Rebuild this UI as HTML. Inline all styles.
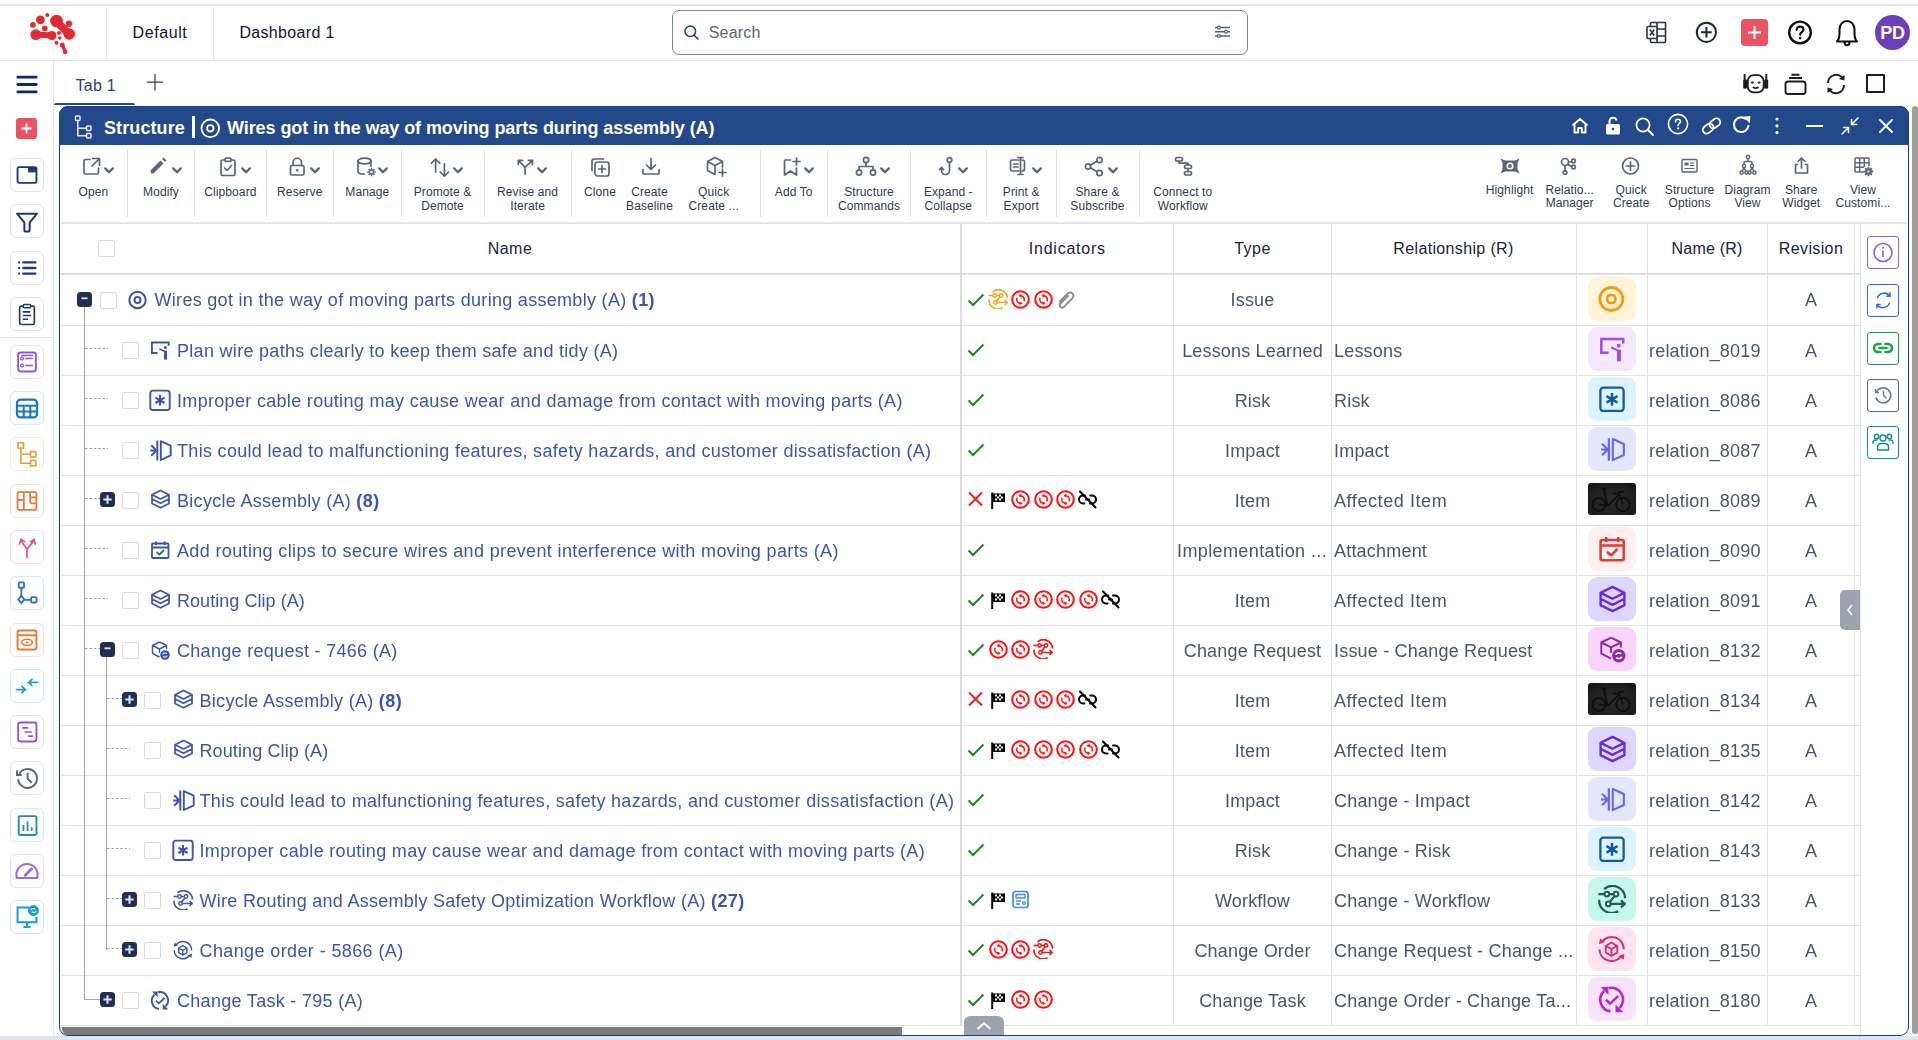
<!DOCTYPE html>
<html><head><meta charset="utf-8"><style>
html,body{margin:0;padding:0;width:1918px;height:1040px;overflow:hidden;background:#fff;position:relative}
body{font-family:"Liberation Sans", sans-serif}
.a{position:absolute;display:block}
.t{position:absolute;white-space:nowrap;line-height:1}
</style></head><body>
<div class="a" style="left:0px;top:4px;width:1918px;height:2px;background:#e4e6e6"></div><div class="a" style="left:0px;top:60px;width:1918px;height:1px;background:#e0e2e6"></div><svg class="a" style="left:0px;top:0px;" width="100" height="60" viewBox="0 0 100 60" fill="none"><g fill="#e02b35">
<circle cx="47.3" cy="15" r="2"/>
<circle cx="40.4" cy="19.8" r="4.4"/>
<circle cx="32.9" cy="24.8" r="2.9"/>
<circle cx="44.8" cy="28.3" r="2.9"/>
<circle cx="56.5" cy="21" r="6.3"/>
<circle cx="69.2" cy="34" r="5.8"/>
<path d="M56 21 L69 34" stroke="#e02b35" stroke-width="8" stroke-linecap="round"/>
<circle cx="68.9" cy="23.7" r="3.2"/>
<circle cx="35.8" cy="34.6" r="5.4"/>
<circle cx="51.9" cy="35.6" r="4.6"/>
<path d="M36 34.6 L52 35.6" stroke="#e02b35" stroke-width="6" stroke-linecap="round"/>
<circle cx="59" cy="32.9" r="2"/>
<circle cx="59.8" cy="38" r="1.7"/>
<circle cx="56.5" cy="42.7" r="2"/>
<circle cx="62.3" cy="45" r="2.5"/>
<circle cx="65.2" cy="51.9" r="2.3"/>
<path d="M62.3 45 L65.2 51.9" stroke="#e02b35" stroke-width="3.2" stroke-linecap="round"/>
</g></svg><div class="a" style="left:106px;top:8px;width:1px;height:50px;background:#e3e5e8"></div><div class="a" style="left:213px;top:8px;width:1px;height:52px;background:#e3e5e8"></div><div class="t" style="left:132.50px;top:24.85px;font-size:16px;font-weight:400;color:#0e1630;letter-spacing:0.6px;">Default</div><div class="t" style="left:239.40px;top:24.85px;font-size:16px;font-weight:400;color:#0e1630;letter-spacing:0.33px;">Dashboard 1</div><div class="a" style="left:672px;top:10px;width:574px;height:43px;border:1.3px solid #7d889e;border-radius:7px;box-sizing:content-box"></div><svg class="a" style="left:682px;top:23px;" width="20" height="20" viewBox="0 0 20 20" fill="none"><circle cx="8.3" cy="8.3" r="5.3" stroke="#1f3b7a" stroke-width="1.5"/><path d="M12.2 12.2 L16 16" stroke="#1f3b7a" stroke-width="1.6" stroke-linecap="round"/></svg><div class="t" style="left:708.70px;top:24.85px;font-size:16px;font-weight:400;color:#5d6573;letter-spacing:0.2px;">Search</div><svg class="a" style="left:1213px;top:24px;" width="20" height="16" viewBox="0 0 20 16" fill="none"><g stroke="#4a62a0" stroke-width="1.5"><path d="M2 3.5H17M2 7.8H17M2 12.1H17"/></g><g fill="#4a62a0"><circle cx="5.8" cy="3.5" r="2"/><circle cx="13" cy="7.8" r="2"/><circle cx="5.8" cy="12.1" r="2"/></g><g fill="#fff"><circle cx="5.8" cy="3.5" r="0.8"/><circle cx="13" cy="7.8" r="0.8"/><circle cx="5.8" cy="12.1" r="0.8"/></g></svg><svg class="a" style="left:1644px;top:20px;" width="26" height="26" viewBox="0 0 26 26" fill="none"><g stroke="#2b3445" stroke-width="1.6" stroke-linejoin="round"><rect x="6.5" y="2.5" width="15" height="20" rx="1"/><path d="M6.5 9H21.5M6.5 16H21.5M13 2.5V22.5"/><rect x="3" y="6.5" width="10" height="12" rx="1" fill="#fff"/><path d="M5.8 9.5L10.2 15.5M10.2 9.5L5.8 15.5"/></g></svg><svg class="a" style="left:1694px;top:20px;" width="25" height="25" viewBox="0 0 25 25" fill="none"><circle cx="12.4" cy="12.3" r="9.6" stroke="#1e2533" stroke-width="2"/><path d="M12.4 7V17.6M7.1 12.3H17.7" stroke="#1e2533" stroke-width="2"/></svg><div class="a" style="left:1741px;top:19px;width:27px;height:27px;background:#ea5360;border-radius:4px"></div><svg class="a" style="left:1741px;top:19px;" width="27" height="27" viewBox="0 0 27 27" fill="none"><path d="M13.5 7V20M7 13.5H20" stroke="#fff" stroke-width="2"/></svg><svg class="a" style="left:1786px;top:19px;" width="28" height="28" viewBox="0 0 28 28" fill="none"><circle cx="14" cy="13.5" r="10.8" stroke="#0b0d12" stroke-width="2.3"/><path d="M10.6 10.8C10.6 8.8 12.1 7.6 14 7.6C15.9 7.6 17.4 8.8 17.4 10.6C17.4 12.9 14.1 13.2 14.1 15.6" stroke="#0b0d12" stroke-width="2.2" fill="none" stroke-linecap="round"/><circle cx="14.1" cy="19.1" r="1.4" fill="#0b0d12"/></svg><svg class="a" style="left:1833px;top:17px;" width="28" height="31" viewBox="0 0 28 31" fill="none"><path d="M4 24.5H24C22 22.5 21.5 20 21.5 16V12.5C21.5 7.5 18.3 4 14 4C9.7 4 6.5 7.5 6.5 12.5V16C6.5 20 6 22.5 4 24.5Z" stroke="#0b0d12" stroke-width="2" stroke-linejoin="round"/><path d="M11.5 25C11.5 27.2 12.6 28.2 14 28.2C15.4 28.2 16.5 27.2 16.5 25" stroke="#0b0d12" stroke-width="2"/></svg><div class="a" style="left:1875px;top:15px;width:35px;height:35px;background:#6b3fb9;border-radius:50%"></div><div class="t" style="left:1872.50px;width:40px;text-align:center;top:24.16px;font-size:18px;font-weight:600;color:#fff;letter-spacing:-0.3px;">PD</div><div class="a" style="left:53px;top:61px;width:1px;height:979px;background:#e3e5e8"></div><svg class="a" style="left:14px;top:74px;" width="26" height="20" viewBox="0 0 26 20" fill="none"><g stroke="#0c2a6b" stroke-width="2.8" stroke-linecap="round"><path d="M3.8 3.2H22.2M3.8 10.5H22.2M3.8 17.8H22.2"/></g></svg><div class="a" style="left:16px;top:118px;width:21px;height:21px;background:#ea5360;border-radius:3px"></div><svg class="a" style="left:16px;top:118px;" width="21" height="21" viewBox="0 0 21 21" fill="none"><path d="M10.5 5.5V15.5M5.5 10.5H15.5" stroke="#fff" stroke-width="1.8"/></svg><div class="a" style="left:10px;top:158.0px;width:32px;height:32px;border:1px solid #dfe4ee;border-radius:6px;background:#fff;box-sizing:content-box"></div><svg class="a" style="left:10px;top:158.0px;transform:scale(1.05);transform-origin:17px 17px" width="34" height="34" viewBox="0 0 34 34" fill="none"><rect x="8" y="9.5" width="18" height="15" rx="1.5" stroke="#1b3a78" stroke-width="1.8"/><rect x="18" y="9.5" width="8" height="5" fill="#1b3a78"/></svg><div class="a" style="left:10px;top:204.2px;width:32px;height:32px;border:1px solid #dfe4ee;border-radius:6px;background:#fff;box-sizing:content-box"></div><svg class="a" style="left:10px;top:204.2px;transform:scale(1.05);transform-origin:17px 17px" width="34" height="34" viewBox="0 0 34 34" fill="none"><path d="M7.5 10H26.5L19.5 18.5V25.5Q19.5 27 18 27H16Q14.5 27 14.5 25.5V18.5Z" stroke="#1b3a78" stroke-width="1.9" stroke-linejoin="round"/></svg><div class="a" style="left:10px;top:250.5px;width:32px;height:32px;border:1px solid #dfe4ee;border-radius:6px;background:#fff;box-sizing:content-box"></div><svg class="a" style="left:10px;top:250.5px;transform:scale(1.05);transform-origin:17px 17px" width="34" height="34" viewBox="0 0 34 34" fill="none"><g fill="#1b3a78"><circle cx="9.5" cy="11.7" r="1.1"/><circle cx="9.5" cy="17" r="1.1"/><circle cx="9.5" cy="22.3" r="1.1"/></g><g stroke="#1b3a78" stroke-width="2.2" stroke-linecap="round"><path d="M13.5 11.7H25M13.5 17H25M13.5 22.3H25"/></g></svg><div class="a" style="left:10px;top:296.8px;width:32px;height:32px;border:1px solid #dfe4ee;border-radius:6px;background:#fff;box-sizing:content-box"></div><svg class="a" style="left:10px;top:296.8px;transform:scale(1.05);transform-origin:17px 17px" width="34" height="34" viewBox="0 0 34 34" fill="none"><rect x="10" y="9.5" width="14" height="17.5" rx="1.5" stroke="#1b3a78" stroke-width="1.6"/><rect x="13.5" y="8" width="7" height="3" rx="1" fill="#fff" stroke="#1b3a78" stroke-width="1.4"/><path d="M13 15H20M13 18.5H21M13 22H18" stroke="#1b3a78" stroke-width="1.5"/></svg><div class="a" style="left:0px;top:337px;width:53px;height:1px;background:#e3e5e8"></div><div class="a" style="left:10px;top:344.7px;width:32px;height:32px;border:1px solid #e9e0fc;border-radius:6px;background:#fff;box-sizing:content-box"></div><svg class="a" style="left:10px;top:344.7px;transform:scale(1.18);transform-origin:17px 17px" width="34" height="34" viewBox="0 0 34 34" fill="none"><rect x="9.5" y="9" width="15" height="16" rx="2" stroke="#8a55e8" stroke-width="1.6"/><circle cx="12.8" cy="14" r="1.2" stroke="#8a55e8" stroke-width="1"/><circle cx="12.8" cy="20" r="1.2" stroke="#8a55e8" stroke-width="1"/><path d="M15.5 14H22M15.5 20H22M12 11.5H22" stroke="#8a55e8" stroke-width="1.3"/></svg><div class="a" style="left:10px;top:391.0px;width:32px;height:32px;border:1px solid #d5e8f5;border-radius:6px;background:#fff;box-sizing:content-box"></div><svg class="a" style="left:10px;top:391.0px;transform:scale(1.18);transform-origin:17px 17px" width="34" height="34" viewBox="0 0 34 34" fill="none"><rect x="8.5" y="10" width="17" height="15" rx="3" stroke="#1e78b5" stroke-width="1.9"/><path d="M8.5 15H25.5M8.5 20H25.5M14.2 15V25M19.8 15V25" stroke="#1e78b5" stroke-width="1.7"/></svg><div class="a" style="left:10px;top:437.3px;width:32px;height:32px;border:1px solid #fbead2;border-radius:6px;background:#fff;box-sizing:content-box"></div><svg class="a" style="left:10px;top:437.3px;transform:scale(1.18);transform-origin:17px 17px" width="34" height="34" viewBox="0 0 34 34" fill="none"><g stroke="#e3a33a" stroke-width="1.4"><rect x="9.5" y="7.5" width="4.5" height="4.5"/><rect x="20" y="15" width="4.5" height="4.5"/><rect x="20" y="22.5" width="4.5" height="4.5"/><path d="M11.8 12V24.8H20M11.8 17.2H20"/></g></svg><div class="a" style="left:10px;top:483.6px;width:32px;height:32px;border:1px solid #fde2d0;border-radius:6px;background:#fff;box-sizing:content-box"></div><svg class="a" style="left:10px;top:483.6px;transform:scale(1.18);transform-origin:17px 17px" width="34" height="34" viewBox="0 0 34 34" fill="none"><g stroke="#e47a3b" stroke-width="1.5"><rect x="9" y="9.5" width="16" height="15" rx="1"/><path d="M14.3 9.5V24.5M19.7 9.5V19M9 16H14.3M19.7 14H25M19.7 19H25"/></g></svg><div class="a" style="left:10px;top:529.9px;width:32px;height:32px;border:1px solid #f9dbe8;border-radius:6px;background:#fff;box-sizing:content-box"></div><svg class="a" style="left:10px;top:529.9px;transform:scale(1.18);transform-origin:17px 17px" width="34" height="34" viewBox="0 0 34 34" fill="none"><g stroke="#e1568f" stroke-width="1.5" stroke-linecap="round"><path d="M17 26V19L12 12M17 19L22.5 12M10.5 14.5L12 10.5L15 12.5M20 12.5L23 10.5L24 14.5" stroke-dasharray="0"/></g></svg><div class="a" style="left:10px;top:576.2px;width:32px;height:32px;border:1px solid #d6e7f3;border-radius:6px;background:#fff;box-sizing:content-box"></div><svg class="a" style="left:10px;top:576.2px;transform:scale(1.18);transform-origin:17px 17px" width="34" height="34" viewBox="0 0 34 34" fill="none"><g stroke="#2d78b4" stroke-width="1.6"><rect x="10" y="8" width="4.5" height="4.5" rx="0.8"/><rect x="20.5" y="20.5" width="4.5" height="4.5" rx="0.8"/><path d="M12.2 12.5V20M14.8 22.8H20.5"/><path d="M12.2 19.5L14.8 22.5L12.2 25.5L9.6 22.5Z"/></g></svg><div class="a" style="left:10px;top:622.5px;width:32px;height:32px;border:1px solid #fde0cc;border-radius:6px;background:#fff;box-sizing:content-box"></div><svg class="a" style="left:10px;top:622.5px;transform:scale(1.18);transform-origin:17px 17px" width="34" height="34" viewBox="0 0 34 34" fill="none"><rect x="9" y="9" width="16" height="16" rx="1.5" stroke="#e8762c" stroke-width="1.6"/><path d="M9 13H25" stroke="#e8762c" stroke-width="1.6"/><ellipse cx="17" cy="19" rx="4.5" ry="2.6" stroke="#e8762c" stroke-width="1.3"/><circle cx="17" cy="19" r="1" fill="#e8762c"/></svg><div class="a" style="left:10px;top:668.8px;width:32px;height:32px;border:1px solid #d2ecf6;border-radius:6px;background:#fff;box-sizing:content-box"></div><svg class="a" style="left:10px;top:668.8px;transform:scale(1.18);transform-origin:17px 17px" width="34" height="34" viewBox="0 0 34 34" fill="none"><g stroke="#23a0c9" stroke-width="1.5" stroke-linecap="round"><path d="M8 20H15.5L12.8 17.3M15.5 20L12.8 22.7M26 14H18.5L21.2 11.3M18.5 14L21.2 16.7"/></g></svg><div class="a" style="left:10px;top:715.1px;width:32px;height:32px;border:1px solid #eadcfb;border-radius:6px;background:#fff;box-sizing:content-box"></div><svg class="a" style="left:10px;top:715.1px;transform:scale(1.18);transform-origin:17px 17px" width="34" height="34" viewBox="0 0 34 34" fill="none"><rect x="9.5" y="9" width="15.5" height="16" rx="2" stroke="#9650e0" stroke-width="1.6"/><path d="M13 13.5H18M15 17H21M18 20.5H22" stroke="#9650e0" stroke-width="1.4"/></svg><div class="a" style="left:10px;top:761.4px;width:32px;height:32px;border:1px solid #e4e6ea;border-radius:6px;background:#fff;box-sizing:content-box"></div><svg class="a" style="left:10px;top:761.4px;transform:scale(1.18);transform-origin:17px 17px" width="34" height="34" viewBox="0 0 34 34" fill="none"><path d="M10.5 13.5A8 8 0 1 1 9.5 18" stroke="#596377" stroke-width="1.6" fill="none"/><path d="M8.5 10.5V14.5H12.5" stroke="#596377" stroke-width="1.6" fill="none"/><path d="M17.5 12.5V17.5L21 21" stroke="#596377" stroke-width="1.6"/></svg><div class="a" style="left:10px;top:807.7px;width:32px;height:32px;border:1px solid #d3ecf0;border-radius:6px;background:#fff;box-sizing:content-box"></div><svg class="a" style="left:10px;top:807.7px;transform:scale(1.18);transform-origin:17px 17px" width="34" height="34" viewBox="0 0 34 34" fill="none"><rect x="10" y="9.5" width="15" height="16" rx="1" stroke="#1f8fa2" stroke-width="1.6"/><path d="M14 17V22M17.5 14V22M21 19V22" stroke="#1f8fa2" stroke-width="1.5"/></svg><div class="a" style="left:10px;top:854.0px;width:32px;height:32px;border:1px solid #e9defb;border-radius:6px;background:#fff;box-sizing:content-box"></div><svg class="a" style="left:10px;top:854.0px;transform:scale(1.18);transform-origin:17px 17px" width="34" height="34" viewBox="0 0 34 34" fill="none"><path d="M8.5 23A9 9 0 1 1 25.5 23Z" stroke="#9a6ae0" stroke-width="1.7" stroke-linejoin="round"/><path d="M15.5 20.5L21 15" stroke="#9a6ae0" stroke-width="2.4" stroke-linecap="round"/></svg><div class="a" style="left:10px;top:900.3px;width:32px;height:32px;border:1px solid #cfeaf7;border-radius:6px;background:#fff;box-sizing:content-box"></div><svg class="a" style="left:10px;top:900.3px;transform:scale(1.18);transform-origin:17px 17px" width="34" height="34" viewBox="0 0 34 34" fill="none"><g stroke="#1a9ad5" stroke-width="1.7"><path d="M19 9H9V21.5H25V17"/><path d="M17 21.5V25M14 25.5H20"/></g><circle cx="22.5" cy="11.5" r="4.6" fill="#1a9ad5"/><path d="M20.3 11C20.7 9.8 22.8 9.3 24 10.5M24.7 12C24.3 13.2 22.2 13.7 21 12.5" stroke="#fff" stroke-width="1"/></svg><div class="t" style="left:75.60px;top:78.05px;font-size:16px;font-weight:400;color:#2a4372;letter-spacing:0.2px;">Tab 1</div><div class="a" style="left:54px;top:103px;width:81px;height:2px;background:#23488b;border-radius:2px 2px 0 0"></div><svg class="a" style="left:145px;top:72px;" width="20" height="20" viewBox="0 0 20 20" fill="none"><path d="M10 2V18.5M1.8 10.2H18.2" stroke="#3a3e4c" stroke-width="1.25"/></svg><svg class="a" style="left:1741px;top:72px;" width="30" height="24" viewBox="0 0 30 24" fill="none"><g stroke="#1a1c28" stroke-width="1.9" fill="none"><rect x="6.7" y="3.1" width="16" height="17.3" rx="6"/><path d="M3.6 2V16.5M25.3 2V16.5"/><path d="M10.3 11.2Q11.4 9.6 12.5 11.2M17 11.2Q18.1 9.6 19.2 11.2" stroke-width="1.6"/><path d="M12 15Q14.7 17.3 17.4 15" stroke-width="1.7"/></g><rect x="2.3" y="7.5" width="4" height="9" rx="1.2" fill="#1a1c28"/><rect x="23.2" y="7.5" width="4" height="9" rx="1.2" fill="#1a1c28"/></svg><svg class="a" style="left:1783px;top:72px;" width="26" height="24" viewBox="0 0 26 24" fill="none"><g stroke="#1a1c28" stroke-width="1.9" fill="none"><rect x="2.5" y="9.5" width="20" height="12.5" rx="2.5"/><path d="M6 6H19M8.5 2.7H16.5"/></g></svg><svg class="a" style="left:1824px;top:72px;" width="24" height="24" viewBox="0 0 24 24" fill="none"><g stroke="#1a1c28" stroke-width="2" fill="none"><path d="M4 11A8 8 0 0 1 19 7M20 13A8 8 0 0 1 5 17"/></g><path d="M15 7L20.5 8.5L20.5 3Z" fill="#1a1c28"/><path d="M9 17L3.5 15.5L3.5 21Z" fill="#1a1c28"/></svg><div class="a" style="left:1866px;top:74px;width:19px;height:19px;border:2.4px solid #1a1c28;box-sizing:border-box;border-radius:1px"></div><div class="a" style="left:59px;top:106px;width:1850px;height:930px;border-radius:9px;background:#fff"></div><div class="a" style="left:59px;top:106px;width:1850px;height:39px;background:#23498b;border-radius:9px 9px 0 0;border-top:1px solid #0b4292;box-sizing:border-box"></div><svg class="a" style="left:72px;top:113px;" width="24" height="27" viewBox="0 0 24 27" fill="none"><g stroke="#e8ecf5" stroke-width="1.5" fill="none"><rect x="3.5" y="3" width="4.5" height="4.5" rx="1"/><rect x="14.5" y="13" width="4.5" height="4.5" rx="1"/><rect x="14.5" y="20.5" width="4.5" height="4.5" rx="1"/><path d="M5.8 7.5V22.8H14.5M5.8 15.2H14.5"/></g></svg><div class="t" style="left:104.00px;top:119.36px;font-size:18px;font-weight:700;color:#fff;letter-spacing:0.1px;">Structure</div><div class="a" style="left:192px;top:116px;width:3px;height:22px;background:#fff"></div><svg class="a" style="left:200px;top:118px;" width="21" height="21" viewBox="0 0 21 21" fill="none"><circle cx="10.3" cy="10.3" r="8.8" stroke="#fff" stroke-width="1.8"/><circle cx="10.3" cy="10.3" r="3.2" stroke="#fff" stroke-width="1.8"/></svg><div class="t" style="left:227.00px;top:119.36px;font-size:18px;font-weight:700;color:#fff;letter-spacing:-0.08px;">Wires got in the way of moving parts during assembly (A)</div><svg class="a" style="left:1570px;top:116px;" width="20" height="20" viewBox="0 0 20 20" fill="none"><path d="M2.5 9.5L10 3L17.5 9.5M4.5 8V16.5H8.2V12H11.8V16.5H15.5V8" stroke="#fff" stroke-width="1.9" fill="none" stroke-linejoin="round"/></svg><svg class="a" style="left:1603px;top:115px;" width="20" height="21" viewBox="0 0 20 21" fill="none"><path d="M6.5 9V6.5A3.6 3.6 0 0 1 13.6 5.5" stroke="#fff" stroke-width="2" fill="none"/><rect x="3" y="9" width="14" height="10.5" rx="1.5" fill="#fff"/><circle cx="10" cy="14" r="1.3" fill="#23488b"/></svg><svg class="a" style="left:1634px;top:116px;" width="22" height="22" viewBox="0 0 22 22" fill="none"><circle cx="9" cy="9" r="6.6" stroke="#fff" stroke-width="1.8"/><path d="M13.8 13.8L19 19" stroke="#fff" stroke-width="2" stroke-linecap="round"/></svg><svg class="a" style="left:1666px;top:112px;" width="24" height="24" viewBox="0 0 24 24" fill="none"><circle cx="12" cy="12" r="9.6" stroke="#fff" stroke-width="1.6"/><path d="M9.5 9.8C9.5 8.3 10.6 7.3 12 7.3C13.4 7.3 14.5 8.2 14.5 9.6C14.5 11.4 12.1 11.5 12.1 13.6" stroke="#fff" stroke-width="1.6" fill="none" stroke-linecap="round"/><circle cx="12.1" cy="16.4" r="1.1" fill="#fff"/></svg><svg class="a" style="left:1699px;top:115px;" width="25" height="22" viewBox="0 0 25 22" fill="none"><g transform="rotate(-38 12.5 11)" stroke="#fff" stroke-width="1.8" fill="none"><rect x="2.5" y="7.2" width="11.5" height="7.6" rx="3.8"/><rect x="11" y="7.2" width="11.5" height="7.6" rx="3.8"/></g></svg><svg class="a" style="left:1731px;top:114px;" width="22" height="21" viewBox="0 0 22 21" fill="none"><path d="M17.5 11A7.3 7.3 0 1 1 15 5.2" stroke="#fff" stroke-width="2.1" fill="none"/><path d="M12.5 2.8L19.5 2L18.8 9.2Z" fill="#fff"/></svg><svg class="a" style="left:1772px;top:116px;" width="10" height="20" viewBox="0 0 10 20" fill="none"><g fill="#fff"><circle cx="5" cy="3" r="1.6"/><circle cx="5" cy="9.8" r="1.6"/><circle cx="5" cy="16.6" r="1.6"/></g></svg><div class="a" style="left:1806px;top:124.5px;width:17px;height:2px;background:#fff"></div><svg class="a" style="left:1839px;top:115px;" width="22" height="22" viewBox="0 0 22 22" fill="none"><g stroke="#fff" stroke-width="1.6" fill="none" stroke-linecap="round"><path d="M12.5 9.5L19 3M12.5 4.5V9.5H17.5M9.5 12.5L3 19M4.5 12.5H9.5V17.5"/></g></svg><svg class="a" style="left:1877px;top:117px;" width="18" height="18" viewBox="0 0 18 18" fill="none"><path d="M3 3L15 15M15 3L3 15" stroke="#fff" stroke-width="1.9" stroke-linecap="round"/></svg><div class="a" style="left:61px;top:222px;width:1846px;height:2px;background:#e4e6ea"></div><div class="a" style="left:127px;top:150px;width:1px;height:67px;background:#dcdfe5"></div><div class="a" style="left:194px;top:150px;width:1px;height:67px;background:#dcdfe5"></div><div class="a" style="left:266px;top:150px;width:1px;height:67px;background:#dcdfe5"></div><div class="a" style="left:333px;top:150px;width:1px;height:67px;background:#dcdfe5"></div><div class="a" style="left:401px;top:150px;width:1px;height:67px;background:#dcdfe5"></div><div class="a" style="left:484px;top:150px;width:1px;height:67px;background:#dcdfe5"></div><div class="a" style="left:571px;top:150px;width:1px;height:67px;background:#dcdfe5"></div><div class="a" style="left:760px;top:150px;width:1px;height:67px;background:#dcdfe5"></div><div class="a" style="left:827px;top:150px;width:1px;height:67px;background:#dcdfe5"></div><div class="a" style="left:910px;top:150px;width:1px;height:67px;background:#dcdfe5"></div><div class="a" style="left:986px;top:150px;width:1px;height:67px;background:#dcdfe5"></div><div class="a" style="left:1056px;top:150px;width:1px;height:67px;background:#dcdfe5"></div><div class="a" style="left:1139px;top:150px;width:1px;height:67px;background:#dcdfe5"></div><svg class="a" style="left:81px;top:156px;" width="21" height="21" viewBox="0 0 21 21" fill="none"><path d="M9 3.5H4.5Q3 3.5 3 5V16.5Q3 18 4.5 18H16Q17.5 18 17.5 16.5V12" stroke="#5b6578" stroke-width="1.7" fill="none" stroke-linecap="round" stroke-linejoin="round"/><path d="M11.5 2.5H18.5V9.5M18.5 2.5L11 10" stroke="#5b6578" stroke-width="1.7" fill="none" stroke-linecap="round" stroke-linejoin="round"/></svg><svg class="a" style="left:103px;top:165px;" width="13" height="10" viewBox="0 0 13 10" fill="none"><path d="M2.2 3.4L6 7.2L9.8 3.4" stroke="#5b6578" stroke-width="2.3" fill="none" stroke-linecap="round" stroke-linejoin="round"/></svg><div class="t" style="left:33.50px;width:120px;text-align:center;top:186.44px;font-size:12px;font-weight:400;color:#2e3a4e;letter-spacing:0.1px;">Open</div><svg class="a" style="left:147px;top:156px;" width="21" height="21" viewBox="0 0 21 21" fill="none"><path d="M4 17.5L3.5 14.5L13.5 4.5L16.5 7.5L6.5 17.5Z" fill="#5b6578"/><path d="M15 3L16.5 1.5L19.5 4.5L18 6Z" fill="#5b6578"/></svg><svg class="a" style="left:171px;top:165px;" width="13" height="10" viewBox="0 0 13 10" fill="none"><path d="M2.2 3.4L6 7.2L9.8 3.4" stroke="#5b6578" stroke-width="2.3" fill="none" stroke-linecap="round" stroke-linejoin="round"/></svg><div class="t" style="left:101.00px;width:120px;text-align:center;top:186.44px;font-size:12px;font-weight:400;color:#2e3a4e;letter-spacing:0.1px;">Modify</div><svg class="a" style="left:218px;top:156px;" width="21" height="21" viewBox="0 0 21 21" fill="none"><rect x="3" y="4" width="14" height="15.5" rx="1.5" stroke="#5b6578" stroke-width="1.7" fill="none" stroke-linecap="round" stroke-linejoin="round"/><rect x="7" y="2.2" width="6" height="3.2" rx="1" fill="#fff" stroke="#5b6578" stroke-width="1.7" fill="none" stroke-linecap="round" stroke-linejoin="round"/><path d="M6.5 12L9 14.5L13.5 9.5" stroke="#5b6578" stroke-width="1.7" fill="none" stroke-linecap="round" stroke-linejoin="round"/></svg><svg class="a" style="left:240px;top:165px;" width="13" height="10" viewBox="0 0 13 10" fill="none"><path d="M2.2 3.4L6 7.2L9.8 3.4" stroke="#5b6578" stroke-width="2.3" fill="none" stroke-linecap="round" stroke-linejoin="round"/></svg><div class="t" style="left:170.40px;width:120px;text-align:center;top:186.44px;font-size:12px;font-weight:400;color:#2e3a4e;letter-spacing:0.1px;">Clipboard</div><svg class="a" style="left:287px;top:156px;" width="21" height="21" viewBox="0 0 21 21" fill="none"><path d="M6 9.5V6.5A4.2 4.2 0 0 1 14.5 6.5V9.5" stroke="#5b6578" stroke-width="1.7" fill="none" stroke-linecap="round" stroke-linejoin="round"/><rect x="3.5" y="9.5" width="13.5" height="9.5" rx="1.5" stroke="#5b6578" stroke-width="1.7" fill="none" stroke-linecap="round" stroke-linejoin="round"/><circle cx="10.2" cy="14.2" r="1.3" fill="#5b6578"/></svg><svg class="a" style="left:308.5px;top:165px;" width="13" height="10" viewBox="0 0 13 10" fill="none"><path d="M2.2 3.4L6 7.2L9.8 3.4" stroke="#5b6578" stroke-width="2.3" fill="none" stroke-linecap="round" stroke-linejoin="round"/></svg><div class="t" style="left:239.80px;width:120px;text-align:center;top:186.44px;font-size:12px;font-weight:400;color:#2e3a4e;letter-spacing:0.1px;">Reserve</div><svg class="a" style="left:355px;top:156px;" width="24" height="22" viewBox="0 0 24 22" fill="none"><ellipse cx="9.5" cy="5" rx="6.5" ry="2.8" stroke="#5b6578" stroke-width="1.7" fill="none" stroke-linecap="round" stroke-linejoin="round"/><path d="M3 5V15.5Q3 18 9 18.2M16 5V10" stroke="#5b6578" stroke-width="1.7" fill="none" stroke-linecap="round" stroke-linejoin="round"/><circle cx="16.5" cy="16" r="2.2" stroke="#5b6578" stroke-width="1.7" fill="none" stroke-linecap="round" stroke-linejoin="round"/><path d="M16.5 11.8V13M16.5 19V20.2M12.3 16H13.5M19.5 16H20.7M13.6 13.1L14.4 13.9M18.6 18.1L19.4 18.9M13.6 18.9L14.4 18.1M18.6 13.9L19.4 13.1" stroke="#5b6578" stroke-width="1.4"/></svg><svg class="a" style="left:377px;top:165px;" width="13" height="10" viewBox="0 0 13 10" fill="none"><path d="M2.2 3.4L6 7.2L9.8 3.4" stroke="#5b6578" stroke-width="2.3" fill="none" stroke-linecap="round" stroke-linejoin="round"/></svg><div class="t" style="left:307.30px;width:120px;text-align:center;top:186.44px;font-size:12px;font-weight:400;color:#2e3a4e;letter-spacing:0.1px;">Manage</div><svg class="a" style="left:429px;top:156px;" width="22" height="22" viewBox="0 0 22 22" fill="none"><path d="M6.6 3V16M2.4 7.2L6.6 3L10.8 7.2M15.4 7.8V20.2M11.2 16L15.4 20.2L19.6 16" stroke="#5b6578" stroke-width="1.7" fill="none" stroke-linecap="round" stroke-linejoin="round"/></svg><svg class="a" style="left:451.5px;top:165px;" width="13" height="10" viewBox="0 0 13 10" fill="none"><path d="M2.2 3.4L6 7.2L9.8 3.4" stroke="#5b6578" stroke-width="2.3" fill="none" stroke-linecap="round" stroke-linejoin="round"/></svg><div class="t" style="left:382.50px;width:120px;text-align:center;top:186.44px;font-size:12px;font-weight:400;color:#2e3a4e;letter-spacing:0.1px;">Promote &amp;</div><div class="t" style="left:382.50px;width:120px;text-align:center;top:200.44px;font-size:12px;font-weight:400;color:#2e3a4e;letter-spacing:0.1px;">Demote</div><svg class="a" style="left:515px;top:156px;" width="20" height="21" viewBox="0 0 20 21" fill="none"><path d="M10.1 18.2V13.5Q10.1 11.2 8.5 9.6L3.3 4.4M3.3 8.6V4.4H7.5M10.3 11.2L17.5 4.4M13.3 4.4H17.5V8.6" stroke="#5b6578" stroke-width="1.7" fill="none" stroke-linecap="round" stroke-linejoin="round"/></svg><svg class="a" style="left:536px;top:165px;" width="13" height="10" viewBox="0 0 13 10" fill="none"><path d="M2.2 3.4L6 7.2L9.8 3.4" stroke="#5b6578" stroke-width="2.3" fill="none" stroke-linecap="round" stroke-linejoin="round"/></svg><div class="t" style="left:467.60px;width:120px;text-align:center;top:186.44px;font-size:12px;font-weight:400;color:#2e3a4e;letter-spacing:0.1px;">Revise and</div><div class="t" style="left:467.60px;width:120px;text-align:center;top:200.44px;font-size:12px;font-weight:400;color:#2e3a4e;letter-spacing:0.1px;">Iterate</div><svg class="a" style="left:589px;top:156px;" width="24" height="22" viewBox="0 0 24 22" fill="none"><rect x="6" y="6" width="14" height="14" rx="2.5" stroke="#5b6578" stroke-width="1.7" fill="none" stroke-linecap="round" stroke-linejoin="round"/><path d="M3 14.5V5.5Q3 3 5.5 3H14.5" stroke="#5b6578" stroke-width="1.7" fill="none" stroke-linecap="round" stroke-linejoin="round"/><path d="M13 9.5V16.5M9.5 13H16.5" stroke="#5b6578" stroke-width="1.7" fill="none" stroke-linecap="round" stroke-linejoin="round"/></svg><div class="t" style="left:540.00px;width:120px;text-align:center;top:186.44px;font-size:12px;font-weight:400;color:#2e3a4e;letter-spacing:0.1px;">Clone</div><svg class="a" style="left:640px;top:156px;" width="22" height="21" viewBox="0 0 22 21" fill="none"><path d="M11 2.5V13M6.5 9L11 13.5L15.5 9M3 13.5V18H19V13.5" stroke="#5b6578" stroke-width="1.7" fill="none" stroke-linecap="round" stroke-linejoin="round"/></svg><div class="t" style="left:589.50px;width:120px;text-align:center;top:186.44px;font-size:12px;font-weight:400;color:#2e3a4e;letter-spacing:0.1px;">Create</div><div class="t" style="left:589.50px;width:120px;text-align:center;top:200.44px;font-size:12px;font-weight:400;color:#2e3a4e;letter-spacing:0.1px;">Baseline</div><svg class="a" style="left:704px;top:155px;" width="24" height="23" viewBox="0 0 24 23" fill="none"><path d="M11 2.5L18.5 6.5V12M11 2.5L3.5 6.5V15.5L11 19.5V10.5L18.5 6.5M3.5 6.5L11 10.5" stroke="#5b6578" stroke-width="1.7" fill="none" stroke-linecap="round" stroke-linejoin="round"/><path d="M18.5 14V21M15 17.5H22" stroke="#5b6578" stroke-width="1.7" fill="none" stroke-linecap="round" stroke-linejoin="round"/></svg><div class="t" style="left:653.70px;width:120px;text-align:center;top:186.44px;font-size:12px;font-weight:400;color:#2e3a4e;letter-spacing:0.1px;">Quick</div><div class="t" style="left:653.70px;width:120px;text-align:center;top:200.44px;font-size:12px;font-weight:400;color:#2e3a4e;letter-spacing:0.1px;">Create ...</div><svg class="a" style="left:781px;top:156px;" width="22" height="22" viewBox="0 0 22 22" fill="none"><path d="M9.5 4H4.5Q3.5 4 3.5 5V19L9.5 15L15.5 19V12" stroke="#5b6578" stroke-width="1.7" fill="none" stroke-linecap="round" stroke-linejoin="round"/><path d="M15.5 2V9M12 5.5H19" stroke="#5b6578" stroke-width="1.7" fill="none" stroke-linecap="round" stroke-linejoin="round"/></svg><svg class="a" style="left:803px;top:165px;" width="13" height="10" viewBox="0 0 13 10" fill="none"><path d="M2.2 3.4L6 7.2L9.8 3.4" stroke="#5b6578" stroke-width="2.3" fill="none" stroke-linecap="round" stroke-linejoin="round"/></svg><div class="t" style="left:733.70px;width:120px;text-align:center;top:186.44px;font-size:12px;font-weight:400;color:#2e3a4e;letter-spacing:0.1px;">Add To</div><svg class="a" style="left:854px;top:155px;" width="24" height="23" viewBox="0 0 24 23" fill="none"><circle cx="12" cy="5" r="2.6" stroke="#5b6578" stroke-width="1.7" fill="none" stroke-linecap="round" stroke-linejoin="round"/><circle cx="5" cy="17.5" r="2.6" stroke="#5b6578" stroke-width="1.7" fill="none" stroke-linecap="round" stroke-linejoin="round"/><circle cx="19" cy="17.5" r="2.6" stroke="#5b6578" stroke-width="1.7" fill="none" stroke-linecap="round" stroke-linejoin="round"/><path d="M12 7.6V11.5M5 14.9V11.5H19V14.9" stroke="#5b6578" stroke-width="1.7" fill="none" stroke-linecap="round" stroke-linejoin="round"/></svg><svg class="a" style="left:879px;top:165px;" width="13" height="10" viewBox="0 0 13 10" fill="none"><path d="M2.2 3.4L6 7.2L9.8 3.4" stroke="#5b6578" stroke-width="2.3" fill="none" stroke-linecap="round" stroke-linejoin="round"/></svg><div class="t" style="left:809.00px;width:120px;text-align:center;top:186.44px;font-size:12px;font-weight:400;color:#2e3a4e;letter-spacing:0.1px;">Structure</div><div class="t" style="left:809.00px;width:120px;text-align:center;top:200.44px;font-size:12px;font-weight:400;color:#2e3a4e;letter-spacing:0.1px;">Commands</div><svg class="a" style="left:938px;top:155px;" width="20" height="23" viewBox="0 0 20 23" fill="none"><path d="M11.5 8V15.5A4 4 0 0 1 3.5 15.5V13" stroke="#5b6578" stroke-width="1.7" fill="none" stroke-linecap="round" stroke-linejoin="round"/><circle cx="11.5" cy="5" r="2.3" stroke="#5b6578" stroke-width="1.7" fill="none" stroke-linecap="round" stroke-linejoin="round"/><path d="M1.6 14.6L3.5 12.4L5.4 14.6" stroke="#5b6578" stroke-width="1.7" fill="none" stroke-linecap="round" stroke-linejoin="round"/></svg><svg class="a" style="left:957px;top:165px;" width="13" height="10" viewBox="0 0 13 10" fill="none"><path d="M2.2 3.4L6 7.2L9.8 3.4" stroke="#5b6578" stroke-width="2.3" fill="none" stroke-linecap="round" stroke-linejoin="round"/></svg><div class="t" style="left:888.30px;width:120px;text-align:center;top:186.44px;font-size:12px;font-weight:400;color:#2e3a4e;letter-spacing:0.1px;">Expand -</div><div class="t" style="left:888.30px;width:120px;text-align:center;top:200.44px;font-size:12px;font-weight:400;color:#2e3a4e;letter-spacing:0.1px;">Collapse</div><svg class="a" style="left:1007px;top:155px;" width="24" height="23" viewBox="0 0 24 23" fill="none"><path d="M12 5H5Q3.5 5 3.5 6.5V14.5Q3.5 16 5 16H12M15 5Q17.5 5 17.5 7V14Q17.5 16 15 16" stroke="#5b6578" stroke-width="1.7" fill="none" stroke-linecap="round" stroke-linejoin="round"/><path d="M13.5 2.5V19.5M11 2.5H16M11 19.5H16M6.5 9H11M6.5 12H11" stroke="#5b6578" stroke-width="1.7" fill="none" stroke-linecap="round" stroke-linejoin="round"/></svg><svg class="a" style="left:1030.5px;top:165px;" width="13" height="10" viewBox="0 0 13 10" fill="none"><path d="M2.2 3.4L6 7.2L9.8 3.4" stroke="#5b6578" stroke-width="2.3" fill="none" stroke-linecap="round" stroke-linejoin="round"/></svg><div class="t" style="left:961.20px;width:120px;text-align:center;top:186.44px;font-size:12px;font-weight:400;color:#2e3a4e;letter-spacing:0.1px;">Print &amp;</div><div class="t" style="left:961.20px;width:120px;text-align:center;top:200.44px;font-size:12px;font-weight:400;color:#2e3a4e;letter-spacing:0.1px;">Export</div><svg class="a" style="left:1083px;top:155px;" width="23" height="23" viewBox="0 0 23 23" fill="none"><circle cx="16.5" cy="5" r="2.7" stroke="#5b6578" stroke-width="1.7" fill="none" stroke-linecap="round" stroke-linejoin="round"/><circle cx="5" cy="11.5" r="2.7" stroke="#5b6578" stroke-width="1.7" fill="none" stroke-linecap="round" stroke-linejoin="round"/><circle cx="16.5" cy="18" r="2.7" stroke="#5b6578" stroke-width="1.7" fill="none" stroke-linecap="round" stroke-linejoin="round"/><path d="M7.4 10.2L14.1 6.3M7.4 12.8L14.1 16.7" stroke="#5b6578" stroke-width="1.7" fill="none" stroke-linecap="round" stroke-linejoin="round"/></svg><svg class="a" style="left:1107px;top:165px;" width="13" height="10" viewBox="0 0 13 10" fill="none"><path d="M2.2 3.4L6 7.2L9.8 3.4" stroke="#5b6578" stroke-width="2.3" fill="none" stroke-linecap="round" stroke-linejoin="round"/></svg><div class="t" style="left:1037.50px;width:120px;text-align:center;top:186.44px;font-size:12px;font-weight:400;color:#2e3a4e;letter-spacing:0.1px;">Share &amp;</div><div class="t" style="left:1037.50px;width:120px;text-align:center;top:200.44px;font-size:12px;font-weight:400;color:#2e3a4e;letter-spacing:0.1px;">Subscribe</div><svg class="a" style="left:1173px;top:155px;" width="22" height="23" viewBox="0 0 22 23" fill="none"><rect x="2.5" y="2.5" width="7" height="3.5" rx="1.7" stroke="#5b6578" stroke-width="1.7" fill="none" stroke-linecap="round" stroke-linejoin="round"/><rect x="11.5" y="10" width="7" height="3.5" rx="1.7" stroke="#5b6578" stroke-width="1.7" fill="none" stroke-linecap="round" stroke-linejoin="round"/><rect x="11.5" y="16.5" width="7" height="3.5" rx="1.7" stroke="#5b6578" stroke-width="1.7" fill="none" stroke-linecap="round" stroke-linejoin="round"/><path d="M6 6V8.2H15V10M15 13.5V16.5" stroke="#5b6578" stroke-width="1.7" fill="none" stroke-linecap="round" stroke-linejoin="round"/></svg><div class="t" style="left:1122.80px;width:120px;text-align:center;top:186.44px;font-size:12px;font-weight:400;color:#2e3a4e;letter-spacing:0.1px;">Connect to</div><div class="t" style="left:1122.80px;width:120px;text-align:center;top:200.44px;font-size:12px;font-weight:400;color:#2e3a4e;letter-spacing:0.1px;">Workflow</div><svg class="a" style="left:1499px;top:156px;" width="22" height="20" viewBox="0 0 22 20" fill="none"><path d="M1.5 2.5L6 4.5H16L20.5 2.5L18.5 7V13L20.5 17.5L16 15.5H6L1.5 17.5L3.5 13V7Z" fill="#5b6578"/><circle cx="11" cy="10" r="3.6" fill="#fff"/><circle cx="11" cy="10" r="1.9" fill="#5b6578"/></svg><div class="t" style="left:1449.60px;width:120px;text-align:center;top:183.74px;font-size:12px;font-weight:400;color:#2e3a4e;letter-spacing:0.1px;">Highlight</div><svg class="a" style="left:1558px;top:156px;" width="22" height="20" viewBox="0 0 22 20" fill="none"><circle cx="7" cy="6" r="3.5" stroke="#5b6578" stroke-width="1.7" fill="none" stroke-linecap="round" stroke-linejoin="round"/><circle cx="15.5" cy="5" r="1.8" stroke="#5b6578" stroke-width="1.7" fill="none" stroke-linecap="round" stroke-linejoin="round"/><circle cx="15.5" cy="11" r="1.8" stroke="#5b6578" stroke-width="1.7" fill="none" stroke-linecap="round" stroke-linejoin="round"/><circle cx="7" cy="16.5" r="1.8" stroke="#5b6578" stroke-width="1.7" fill="none" stroke-linecap="round" stroke-linejoin="round"/><path d="M10.5 6H13.7M10 8.5L13.8 10.5M7 9.5V14.7" stroke="#5b6578" stroke-width="1.7" fill="none" stroke-linecap="round" stroke-linejoin="round"/></svg><div class="t" style="left:1509.70px;width:120px;text-align:center;top:183.74px;font-size:12px;font-weight:400;color:#2e3a4e;letter-spacing:0.1px;">Relatio...</div><div class="t" style="left:1509.70px;width:120px;text-align:center;top:197.04px;font-size:12px;font-weight:400;color:#2e3a4e;letter-spacing:0.1px;">Manager</div><svg class="a" style="left:1620px;top:156px;" width="21" height="21" viewBox="0 0 21 21" fill="none"><circle cx="10.5" cy="10" r="8" stroke="#5b6578" stroke-width="1.7" fill="none" stroke-linecap="round" stroke-linejoin="round"/><path d="M10.5 5.8V14.2M6.3 10H14.7" stroke="#5b6578" stroke-width="1.7" fill="none" stroke-linecap="round" stroke-linejoin="round"/></svg><div class="t" style="left:1571.20px;width:120px;text-align:center;top:183.74px;font-size:12px;font-weight:400;color:#2e3a4e;letter-spacing:0.1px;">Quick</div><div class="t" style="left:1571.20px;width:120px;text-align:center;top:197.04px;font-size:12px;font-weight:400;color:#2e3a4e;letter-spacing:0.1px;">Create</div><svg class="a" style="left:1679px;top:156px;" width="21" height="20" viewBox="0 0 21 20" fill="none"><rect x="3" y="3.5" width="15" height="12.5" rx="1" stroke="#5b6578" stroke-width="1.4" fill="none"/><rect x="5.5" y="6.5" width="4" height="3" fill="#5b6578"/><path d="M11 7H15.5M11 9.5H15.5M5.5 12.5H15.5" stroke="#5b6578" stroke-width="1.2"/></svg><div class="t" style="left:1629.60px;width:120px;text-align:center;top:183.74px;font-size:12px;font-weight:400;color:#2e3a4e;letter-spacing:0.1px;">Structure</div><div class="t" style="left:1629.60px;width:120px;text-align:center;top:197.04px;font-size:12px;font-weight:400;color:#2e3a4e;letter-spacing:0.1px;">Options</div><svg class="a" style="left:1737px;top:154px;" width="22" height="22" viewBox="0 0 22 22" fill="none"><g stroke="#5b6578" stroke-width="1.4" fill="none"><circle cx="11" cy="3" r="1.7"/><path d="M11 4.7V7.5M7 11V8.5Q7 7.5 8 7.5H14Q15 7.5 15 8.5V11"/><circle cx="7" cy="12" r="1.6"/><circle cx="15" cy="12" r="1.6"/><path d="M5 17.2L7 13.6L9 17.2M13 17.2L15 13.6L17 17.2"/><circle cx="4.6" cy="18.6" r="1.6"/><circle cx="9.4" cy="18.6" r="1.6"/><circle cx="12.6" cy="18.6" r="1.6"/><circle cx="17.4" cy="18.6" r="1.6"/></g></svg><div class="t" style="left:1687.50px;width:120px;text-align:center;top:183.74px;font-size:12px;font-weight:400;color:#2e3a4e;letter-spacing:0.1px;">Diagram</div><div class="t" style="left:1687.50px;width:120px;text-align:center;top:197.04px;font-size:12px;font-weight:400;color:#2e3a4e;letter-spacing:0.1px;">View</div><svg class="a" style="left:1791px;top:155px;" width="21" height="21" viewBox="0 0 21 21" fill="none"><path d="M10.5 13V3M7 6.5L10.5 3L14 6.5M6.5 9.5H4.5V18H16.5V9.5H14.5" stroke="#5b6578" stroke-width="1.7" fill="none" stroke-linecap="round" stroke-linejoin="round"/></svg><div class="t" style="left:1741.20px;width:120px;text-align:center;top:183.74px;font-size:12px;font-weight:400;color:#2e3a4e;letter-spacing:0.1px;">Share</div><div class="t" style="left:1741.20px;width:120px;text-align:center;top:197.04px;font-size:12px;font-weight:400;color:#2e3a4e;letter-spacing:0.1px;">Widget</div><svg class="a" style="left:1852px;top:155px;" width="22" height="22" viewBox="0 0 22 22" fill="none"><g stroke="#5b6578" stroke-width="1.5" fill="none"><path d="M12 17H4Q3 17 3 16V4Q3 3 4 3H16Q17 3 17 4V11"/><path d="M3 7.7H17M3 12.3H12M7.7 3V17M12.3 3V12"/></g><g transform="translate(16.5 16.5)"><circle r="3.2" fill="#5b6578"/><path d="M0 -4.8V4.8M-4.8 0H4.8M-3.4 -3.4L3.4 3.4M-3.4 3.4L3.4 -3.4" stroke="#5b6578" stroke-width="1.8"/><circle r="1.1" fill="#fff"/></g></svg><div class="t" style="left:1803.00px;width:120px;text-align:center;top:183.74px;font-size:12px;font-weight:400;color:#2e3a4e;letter-spacing:0.1px;">View</div><div class="t" style="left:1803.00px;width:120px;text-align:center;top:197.04px;font-size:12px;font-weight:400;color:#2e3a4e;letter-spacing:0.1px;">Customi...</div><div class="a" style="left:61px;top:223px;width:1807px;height:1px;background:#e3e3e3"></div><div class="a" style="left:61px;top:273px;width:1799px;height:2px;background:#dedede"></div><div class="a" style="left:97.5px;top:239.5px;width:15px;height:15px;border:1px solid #d9dadd;border-radius:2px;background:#fff;box-sizing:content-box"></div><div class="a" style="left:1173px;top:224px;width:1px;height:801px;background:#e2e2e2"></div><div class="a" style="left:1331px;top:224px;width:1px;height:801px;background:#e2e2e2"></div><div class="a" style="left:1576px;top:224px;width:1px;height:801px;background:#e2e2e2"></div><div class="a" style="left:1647px;top:224px;width:1px;height:801px;background:#e2e2e2"></div><div class="a" style="left:1767px;top:224px;width:1px;height:801px;background:#e2e2e2"></div><div class="a" style="left:1854px;top:224px;width:1px;height:801px;background:#e2e2e2"></div><div class="a" style="left:960px;top:224px;width:2px;height:801px;background:#dcdcdc"></div><div class="t" style="left:360.00px;width:300px;text-align:center;top:241.05px;font-size:16px;font-weight:400;color:#1b2338;letter-spacing:0.5px;">Name</div><div class="t" style="left:967.30px;width:200px;text-align:center;top:241.05px;font-size:16px;font-weight:400;color:#1b2338;letter-spacing:0.75px;">Indicators</div><div class="t" style="left:1177.50px;width:150px;text-align:center;top:241.05px;font-size:16px;font-weight:400;color:#1b2338;letter-spacing:0.5px;">Type</div><div class="t" style="left:1333.50px;width:240px;text-align:center;top:241.05px;font-size:16px;font-weight:400;color:#1b2338;letter-spacing:0.35px;">Relationship (R)</div><div class="t" style="left:1647.00px;width:120px;text-align:center;top:241.05px;font-size:16px;font-weight:400;color:#1b2338;letter-spacing:0.2px;">Name (R)</div><div class="t" style="left:1766.00px;width:90px;text-align:center;top:241.05px;font-size:16px;font-weight:400;color:#1b2338;letter-spacing:0.37px;">Revision</div><div class="a" style="left:1860px;top:224px;width:1px;height:811px;background:#e6e6e6"></div><div class="a" style="left:1867px;top:236px;width:30px;height:31px;border:1.3px solid #8b5cf6;border-radius:3px;background:#fff;box-sizing:content-box"></div><svg class="a" style="left:1867px;top:236px;" width="33" height="33" viewBox="0 0 33 33" fill="none"><circle cx="16" cy="16.5" r="9" stroke="#8b5cf6" stroke-width="1.5" fill="none"/><path d="M16 14.5V21" stroke="#8b5cf6" stroke-width="1.6"/><circle cx="16" cy="11.8" r="1" fill="#8b5cf6"/></svg><div class="a" style="left:1867px;top:284px;width:30px;height:31px;border:1.3px solid #2f6fee;border-radius:3px;background:#fff;box-sizing:content-box"></div><svg class="a" style="left:1867px;top:284px;" width="33" height="33" viewBox="0 0 33 33" fill="none"><g transform="translate(6.8 6.8) scale(0.8)" stroke="#2f6fee" stroke-width="1.9" fill="none" stroke-linecap="round" stroke-linejoin="round"><path d="M4.5 8.5A9 9 0 0 1 20 6.5"/><path d="M20.2 2.8V6.8H16.2"/><path d="M19.5 15.5A9 9 0 0 1 4 17.5"/><path d="M3.8 21.2V17.2H7.8"/><path d="M3.2 12.5A9 9 0 0 0 4 17.5M20.8 11.5A9 9 0 0 0 20 6.5" stroke-width="0"/></g></svg><div class="a" style="left:1867px;top:331.5px;width:30px;height:31px;border:1.3px solid #17a34a;border-radius:3px;background:#fff;box-sizing:content-box"></div><svg class="a" style="left:1867px;top:331.5px;" width="33" height="33" viewBox="0 0 33 33" fill="none"><g stroke="#17a34a" stroke-width="2.6" fill="none" stroke-linecap="round"><path d="M13.5 12H11A4 4 0 0 0 11 20H13.5M18.5 12H21A4 4 0 0 1 21 20H18.5M12.5 16H19.5"/></g></svg><div class="a" style="left:1867px;top:379px;width:30px;height:31px;border:1.3px solid #5d6779;border-radius:3px;background:#fff;box-sizing:content-box"></div><svg class="a" style="left:1867px;top:379px;" width="33" height="33" viewBox="0 0 33 33" fill="none"><path d="M9.5 13A7.5 7.5 0 1 1 9 18.5" stroke="#6b7487" stroke-width="1.5" fill="none"/><path d="M8.5 10V13.5H12" stroke="#6b7487" stroke-width="1.4" fill="none"/><path d="M16.5 12V16.5L19.5 19.5" stroke="#6b7487" stroke-width="1.4"/></svg><div class="a" style="left:1867px;top:426px;width:30px;height:31px;border:1.3px solid #0e9488;border-radius:3px;background:#fff;box-sizing:content-box"></div><svg class="a" style="left:1867px;top:426px;" width="33" height="33" viewBox="0 0 33 33" fill="none"><g stroke="#0e9488" stroke-width="1.4" fill="none"><circle cx="16" cy="12" r="3"/><path d="M10.5 24V21A3.5 3.5 0 0 1 14 17.5H18A3.5 3.5 0 0 1 21.5 21V24Z"/><circle cx="9.5" cy="10.5" r="2.2"/><circle cx="22.5" cy="10.5" r="2.2"/><path d="M6 18V16.5A2.5 2.5 0 0 1 8.5 14H10.5M26 18V16.5A2.5 2.5 0 0 0 23.5 14H21.5"/></g></svg><div class="a" style="left:0;top:0;width:1918px;height:1040px;will-change:transform"><div class="a" style="left:61px;top:325px;width:1799px;height:1px;background:#e2e2e2"></div><div class="a" style="left:77.0px;top:292.2px;width:15px;height:15px;background:#1e2f52;border-radius:3.5px"></div><svg class="a" style="left:77.0px;top:292.2px;" width="15" height="15" viewBox="0 0 15 15" fill="none"><path d="M4.5 6.3H10.5" stroke="#dfe6f2" stroke-width="1.8"/></svg><div class="a" style="left:99.5px;top:291.7px;width:15px;height:15px;border:1px solid #d9dadd;border-radius:2px;background:#fff;box-sizing:content-box"></div><svg class="a" style="left:127.5px;top:289.7px;" width="20" height="20" viewBox="0 0 20 20" fill="none"><circle cx="9.5" cy="10" r="8.2" stroke="#3a56ab" stroke-width="2" fill="none"/><circle cx="9.5" cy="10" r="3" stroke="#3a56ab" stroke-width="2" fill="none"/></svg><div class="t" style="left:154.50px;top:291.36px;font-size:18px;font-weight:400;color:#3a56ab;letter-spacing:0.3px;">Wires got in the way of moving parts during assembly (A) <b style="font-weight:700;letter-spacing:0.4px">(1)</b></div><svg class="a" style="left:966.5px;top:291.7px;" width="18" height="16" viewBox="0 0 18 16" fill="none"><path d="M1.5 8.5L6 13L16.5 2.5" stroke="#1b8a1f" stroke-width="2" fill="none"/></svg><svg class="a" style="left:987.5px;top:288.7px;" width="21" height="20" viewBox="0 0 21 20" fill="none"><path d="M4.5 3A9 9 0 0 1 19.5 9.5M14.5 18.8A9 9 0 0 1 1 10.5" stroke="#f5a516" stroke-width="1.6" fill="none"/><path d="M0.5 6.5H13M13 6.5L7.5 13.5H19M16.5 11L19.3 13.5L16.5 16" stroke="#f5a516" stroke-width="1.6" fill="none" stroke-linejoin="round"/><circle cx="6.5" cy="6.5" r="1.7" fill="#fff" stroke="#f5a516" stroke-width="1.4"/><circle cx="13" cy="6.5" r="1.7" fill="#fff" stroke="#f5a516" stroke-width="1.4"/><circle cx="7.5" cy="13.5" r="1.7" fill="#fff" stroke="#f5a516" stroke-width="1.4"/></svg><svg class="a" style="left:1011.0px;top:290.2px;" width="19" height="19" viewBox="0 0 19 19" fill="none"><circle cx="9.5" cy="9.5" r="8.3" stroke="#ff1010" stroke-width="2.1" fill="none"/><path d="M10 5.7A3.8 3.8 0 0 1 12.8 11.4M6.2 7.6A3.8 3.8 0 0 0 9 13.3" stroke="#ff1010" stroke-width="1.5" fill="none"/><path d="M7.3 5.7L10.4 3.8L10.4 7.6Z M11.7 13.3L8.6 11.4L8.6 15.2Z" fill="#ff1010"/></svg><svg class="a" style="left:1033.5px;top:290.2px;" width="19" height="19" viewBox="0 0 19 19" fill="none"><circle cx="9.5" cy="9.5" r="8.3" stroke="#ff1010" stroke-width="2.1" fill="none"/><path d="M10 5.7A3.8 3.8 0 0 1 12.8 11.4M6.2 7.6A3.8 3.8 0 0 0 9 13.3" stroke="#ff1010" stroke-width="1.5" fill="none"/><path d="M7.3 5.7L10.4 3.8L10.4 7.6Z M11.7 13.3L8.6 11.4L8.6 15.2Z" fill="#ff1010"/></svg><svg class="a" style="left:1056.0px;top:289.7px;transform:scale(1.05)" width="21" height="20" viewBox="0 0 21 20" fill="none"><path d="M4 11.5L11.5 4A3 3 0 0 1 16.3 8.2L8 16.5A2.2 2.2 0 0 1 4.8 13.3L12 6" stroke="#8c8c8c" stroke-width="1.8" fill="none" stroke-linecap="round"/></svg><div class="t" style="left:1174.50px;width:156px;text-align:center;top:291.36px;font-size:18px;font-weight:400;color:#4a5568;letter-spacing:0.17px;">Issue</div><div class="a" style="left:1588px;top:277.4px;width:48px;height:44px;background:#fef3d6;border-radius:9px"></div><div class="a" style="left:1588px;top:277.4px;width:48px;height:44px"><svg class="a" style="transform:scale(1.4);transform-origin:center;left:13.5px;top:12px;" width="20" height="20" viewBox="0 0 20 20" fill="none"><circle cx="9.5" cy="10" r="8.2" stroke="#f29c11" stroke-width="2" fill="none"/><circle cx="9.5" cy="10" r="3" stroke="#f29c11" stroke-width="2" fill="none"/></svg></div><div class="t" style="left:1781.00px;width:60px;text-align:center;top:291.36px;font-size:18px;font-weight:400;color:#4a5568;letter-spacing:0px;">A</div><div class="a" style="left:61px;top:375px;width:1799px;height:1px;background:#e2e2e2"></div><div class="a" style="left:121.5px;top:341.7px;width:15px;height:15px;border:1px solid #d9dadd;border-radius:2px;background:#fff;box-sizing:content-box"></div><svg class="a" style="left:150.0px;top:339.7px;" width="21" height="21" viewBox="0 0 21 21" fill="none"><path d="M7.5 13H1.9V2.5H18.75V5.8" stroke="#3a56ab" stroke-width="1.9" fill="none"/><path d="M10 9.2L14.2 11" stroke="#3a56ab" stroke-width="1.6" fill="none" stroke-linecap="round"/><circle cx="15.3" cy="7.6" r="1.5" fill="#3a56ab"/><path d="M14 10.6H17V19.6H14Z" fill="#3a56ab"/></svg><div class="t" style="left:177.00px;top:342.36px;font-size:18px;font-weight:400;color:#3a56ab;letter-spacing:0.3px;">Plan wire paths clearly to keep them safe and tidy (A)</div><svg class="a" style="left:966.5px;top:341.7px;" width="18" height="16" viewBox="0 0 18 16" fill="none"><path d="M1.5 8.5L6 13L16.5 2.5" stroke="#1b8a1f" stroke-width="2" fill="none"/></svg><div class="t" style="left:1174.50px;width:156px;text-align:center;top:342.36px;font-size:18px;font-weight:400;color:#4a5568;letter-spacing:0.17px;">Lessons Learned</div><div class="t" style="left:1334.00px;top:342.36px;font-size:18px;font-weight:400;color:#4a5568;letter-spacing:0.2px;">Lessons</div><div class="a" style="left:1588px;top:327.4px;width:48px;height:44px;background:#f3e7fd;border-radius:9px"></div><div class="a" style="left:1588px;top:327.4px;width:48px;height:44px"><svg class="a" style="transform:scale(1.3);transform-origin:center;left:13.5px;top:12px;" width="21" height="21" viewBox="0 0 21 21" fill="none"><path d="M7.5 13H1.9V2.5H18.75V5.8" stroke="#a34ae6" stroke-width="1.9" fill="none"/><path d="M10 9.2L14.2 11" stroke="#a34ae6" stroke-width="1.6" fill="none" stroke-linecap="round"/><circle cx="15.3" cy="7.6" r="1.5" fill="#a34ae6"/><path d="M14 10.6H17V19.6H14Z" fill="#a34ae6"/></svg></div><div class="t" style="left:1649.00px;top:342.36px;font-size:18px;font-weight:400;color:#4a5568;letter-spacing:0.2px;">relation_8019</div><div class="t" style="left:1781.00px;width:60px;text-align:center;top:342.36px;font-size:18px;font-weight:400;color:#4a5568;letter-spacing:0px;">A</div><div class="a" style="left:61px;top:425px;width:1799px;height:1px;background:#e2e2e2"></div><div class="a" style="left:121.5px;top:391.7px;width:15px;height:15px;border:1px solid #d9dadd;border-radius:2px;background:#fff;box-sizing:content-box"></div><svg class="a" style="left:149.0px;top:388.7px;" width="22" height="22" viewBox="0 0 22 22" fill="none"><rect x="1.3" y="1.6" width="19.4" height="19.4" rx="2.5" stroke="#3a56ab" stroke-width="1.9" fill="none"/><path d="M11 6V16.6M6.4 8.6L15.6 14M15.6 8.6L6.4 14" stroke="#3a56ab" stroke-width="2.1"/></svg><div class="t" style="left:177.00px;top:392.36px;font-size:18px;font-weight:400;color:#3a56ab;letter-spacing:0.318px;">Improper cable routing may cause wear and damage from contact with moving parts (A)</div><svg class="a" style="left:966.5px;top:391.7px;" width="18" height="16" viewBox="0 0 18 16" fill="none"><path d="M1.5 8.5L6 13L16.5 2.5" stroke="#1b8a1f" stroke-width="2" fill="none"/></svg><div class="t" style="left:1174.50px;width:156px;text-align:center;top:392.36px;font-size:18px;font-weight:400;color:#4a5568;letter-spacing:0.17px;">Risk</div><div class="t" style="left:1334.00px;top:392.36px;font-size:18px;font-weight:400;color:#4a5568;letter-spacing:0.2px;">Risk</div><div class="a" style="left:1588px;top:377.4px;width:48px;height:44px;background:#def2fd;border-radius:9px"></div><div class="a" style="left:1588px;top:377.4px;width:48px;height:44px"><svg class="a" style="transform:scale(1.2);transform-origin:center;left:12.5px;top:11px;" width="22" height="22" viewBox="0 0 22 22" fill="none"><rect x="1.3" y="1.6" width="19.4" height="19.4" rx="2.5" stroke="#0e5f98" stroke-width="1.9" fill="none"/><path d="M11 6V16.6M6.4 8.6L15.6 14M15.6 8.6L6.4 14" stroke="#0e5f98" stroke-width="2.1"/></svg></div><div class="t" style="left:1649.00px;top:392.36px;font-size:18px;font-weight:400;color:#4a5568;letter-spacing:0.2px;">relation_8086</div><div class="t" style="left:1781.00px;width:60px;text-align:center;top:392.36px;font-size:18px;font-weight:400;color:#4a5568;letter-spacing:0px;">A</div><div class="a" style="left:61px;top:475px;width:1799px;height:1px;background:#e2e2e2"></div><div class="a" style="left:121.5px;top:441.7px;width:15px;height:15px;border:1px solid #d9dadd;border-radius:2px;background:#fff;box-sizing:content-box"></div><svg class="a" style="left:150.0px;top:438.7px;" width="22" height="23" viewBox="0 0 22 23" fill="none"><path d="M0.3 11.5H6.5M1.2 6.3L6.5 11.5M1.2 16.7L6.5 11.5" stroke="#3a56ab" stroke-width="1.9" fill="none"/><path d="M7.3 1.5V21.5" stroke="#3a56ab" stroke-width="2"/><path d="M10.8 2.2L20.7 6.6V16.4L10.8 21Z" stroke="#3a56ab" stroke-width="1.9" fill="none" stroke-linejoin="round"/></svg><div class="t" style="left:177.00px;top:442.36px;font-size:18px;font-weight:400;color:#3a56ab;letter-spacing:0.316px;">This could lead to malfunctioning features, safety hazards, and customer dissatisfaction (A)</div><svg class="a" style="left:966.5px;top:441.7px;" width="18" height="16" viewBox="0 0 18 16" fill="none"><path d="M1.5 8.5L6 13L16.5 2.5" stroke="#1b8a1f" stroke-width="2" fill="none"/></svg><div class="t" style="left:1174.50px;width:156px;text-align:center;top:442.36px;font-size:18px;font-weight:400;color:#4a5568;letter-spacing:0.17px;">Impact</div><div class="t" style="left:1334.00px;top:442.36px;font-size:18px;font-weight:400;color:#4a5568;letter-spacing:0.2px;">Impact</div><div class="a" style="left:1588px;top:427.4px;width:48px;height:44px;background:#e3e6fd;border-radius:9px"></div><div class="a" style="left:1588px;top:427.4px;width:48px;height:44px"><svg class="a" style="transform:scale(1.12);transform-origin:center;left:13.5px;top:11px;" width="22" height="23" viewBox="0 0 22 23" fill="none"><path d="M0.3 11.5H6.5M1.2 6.3L6.5 11.5M1.2 16.7L6.5 11.5" stroke="#6568ef" stroke-width="1.9" fill="none"/><path d="M7.3 1.5V21.5" stroke="#6568ef" stroke-width="2"/><path d="M10.8 2.2L20.7 6.6V16.4L10.8 21Z" stroke="#6568ef" stroke-width="1.9" fill="none" stroke-linejoin="round"/></svg></div><div class="t" style="left:1649.00px;top:442.36px;font-size:18px;font-weight:400;color:#4a5568;letter-spacing:0.2px;">relation_8087</div><div class="t" style="left:1781.00px;width:60px;text-align:center;top:442.36px;font-size:18px;font-weight:400;color:#4a5568;letter-spacing:0px;">A</div><div class="a" style="left:61px;top:525px;width:1799px;height:1px;background:#e2e2e2"></div><div class="a" style="left:99.5px;top:492.2px;width:15px;height:15px;background:#1e2f52;border-radius:3.5px"></div><svg class="a" style="left:99.5px;top:492.2px;" width="15" height="15" viewBox="0 0 15 15" fill="none"><path d="M3.3 7.5H11.7M7.5 3.3V11.7" stroke="#dfe6f2" stroke-width="2"/></svg><div class="a" style="left:121.5px;top:491.7px;width:15px;height:15px;border:1px solid #d9dadd;border-radius:2px;background:#fff;box-sizing:content-box"></div><svg class="a" style="left:150.0px;top:489.2px;" width="21" height="21" viewBox="0 0 21 21" fill="none"><path d="M10.5 1.5L19 5.8L10.5 10L2 5.8Z" stroke="#3a56ab" stroke-width="1.7" fill="none" stroke-linejoin="round"/><path d="M2 5.8V10L10.5 14.3L19 10V5.8M2 10V14.5L10.5 18.8L19 14.5V10" stroke="#3a56ab" stroke-width="1.7" fill="none" stroke-linejoin="round"/></svg><div class="t" style="left:177.00px;top:492.36px;font-size:18px;font-weight:400;color:#3a56ab;letter-spacing:0.3px;">Bicycle Assembly (A) <b style="font-weight:700;letter-spacing:0.4px">(8)</b></div><svg class="a" style="left:966.5px;top:490.7px;" width="18" height="16" viewBox="0 0 18 16" fill="none"><path d="M2 1.5L15 14.5M15 1.5L2 14.5" stroke="#ee1c25" stroke-width="2" fill="none"/></svg><svg class="a" style="left:990.0px;top:490.7px;" width="17" height="19" viewBox="0 0 17 19" fill="none"><path d="M2.2 1.5V18" stroke="#000" stroke-width="2"/><rect x="3" y="2.5" width="12" height="8.5" fill="#000"/><g fill="#fff"><rect x="5" y="3.5" width="2" height="2"/><rect x="9" y="3.5" width="2" height="2"/><rect x="7" y="5.5" width="2" height="2"/><rect x="11" y="5.5" width="2" height="2"/><rect x="5" y="7.5" width="2" height="2"/><rect x="9" y="7.5" width="2" height="2"/></g></svg><svg class="a" style="left:1011.0px;top:490.2px;" width="19" height="19" viewBox="0 0 19 19" fill="none"><circle cx="9.5" cy="9.5" r="8.3" stroke="#ff1010" stroke-width="2.1" fill="none"/><path d="M10 5.7A3.8 3.8 0 0 1 12.8 11.4M6.2 7.6A3.8 3.8 0 0 0 9 13.3" stroke="#ff1010" stroke-width="1.5" fill="none"/><path d="M7.3 5.7L10.4 3.8L10.4 7.6Z M11.7 13.3L8.6 11.4L8.6 15.2Z" fill="#ff1010"/></svg><svg class="a" style="left:1033.5px;top:490.2px;" width="19" height="19" viewBox="0 0 19 19" fill="none"><circle cx="9.5" cy="9.5" r="8.3" stroke="#ff1010" stroke-width="2.1" fill="none"/><path d="M10 5.7A3.8 3.8 0 0 1 12.8 11.4M6.2 7.6A3.8 3.8 0 0 0 9 13.3" stroke="#ff1010" stroke-width="1.5" fill="none"/><path d="M7.3 5.7L10.4 3.8L10.4 7.6Z M11.7 13.3L8.6 11.4L8.6 15.2Z" fill="#ff1010"/></svg><svg class="a" style="left:1056.0px;top:490.2px;" width="19" height="19" viewBox="0 0 19 19" fill="none"><circle cx="9.5" cy="9.5" r="8.3" stroke="#ff1010" stroke-width="2.1" fill="none"/><path d="M10 5.7A3.8 3.8 0 0 1 12.8 11.4M6.2 7.6A3.8 3.8 0 0 0 9 13.3" stroke="#ff1010" stroke-width="1.5" fill="none"/><path d="M7.3 5.7L10.4 3.8L10.4 7.6Z M11.7 13.3L8.6 11.4L8.6 15.2Z" fill="#ff1010"/></svg><svg class="a" style="left:1077.0px;top:490.2px;" width="21" height="19" viewBox="0 0 21 19" fill="none"><g stroke="#000" stroke-width="2" fill="none" stroke-linecap="round"><path d="M8 5.5H6A4 4 0 0 0 6 13.5H7.5"/><path d="M13 5.5H15A4 4 0 0 1 15 13.5H13"/><path d="M9 9.5H12"/><path d="M3 1.5L18.5 17.5"/></g></svg><div class="t" style="left:1174.50px;width:156px;text-align:center;top:492.36px;font-size:18px;font-weight:400;color:#4a5568;letter-spacing:0.17px;">Item</div><div class="t" style="left:1334.00px;top:492.36px;font-size:18px;font-weight:400;color:#4a5568;letter-spacing:0.58px;">Affected Item</div><div class="a" style="left:1588px;top:483.4px;width:48px;height:32px;background:radial-gradient(ellipse at 50% 55%,#2a2a2a 0%,#202020 60%,#121212 100%);border-radius:3px"></div><svg class="a" style="left:1588px;top:483.4px;" width="48" height="32" viewBox="0 0 48 32" fill="none"><g stroke="#0d0d0d" stroke-width="1.5" fill="none"><circle cx="11" cy="21.5" r="6.5"/><circle cx="35" cy="21.5" r="6.8"/><path d="M15.5 5.5L19.8 22.5L31.5 11.5M14 5.5H18M19.8 22.5L11 21.5M31.5 11.5L35 21.5M30 9.5L36 8.5M25 10.5H31"/></g></svg><div class="t" style="left:1649.00px;top:492.36px;font-size:18px;font-weight:400;color:#4a5568;letter-spacing:0.2px;">relation_8089</div><div class="t" style="left:1781.00px;width:60px;text-align:center;top:492.36px;font-size:18px;font-weight:400;color:#4a5568;letter-spacing:0px;">A</div><div class="a" style="left:61px;top:575px;width:1799px;height:1px;background:#e2e2e2"></div><div class="a" style="left:121.5px;top:541.7px;width:15px;height:15px;border:1px solid #d9dadd;border-radius:2px;background:#fff;box-sizing:content-box"></div><svg class="a" style="left:150.0px;top:539.7px;" width="21" height="20" viewBox="0 0 21 20" fill="none"><rect x="2" y="3.5" width="16.5" height="14.5" rx="1" stroke="#3a56ab" stroke-width="1.8" fill="none"/><path d="M2 7.5H18.5M6 1.5V5M14.5 1.5V5M6.5 12L9.5 14.5L14 10" stroke="#3a56ab" stroke-width="1.8" fill="none"/></svg><div class="t" style="left:177.00px;top:542.36px;font-size:18px;font-weight:400;color:#3a56ab;letter-spacing:0.356px;">Add routing clips to secure wires and prevent interference with moving parts (A)</div><svg class="a" style="left:966.5px;top:541.7px;" width="18" height="16" viewBox="0 0 18 16" fill="none"><path d="M1.5 8.5L6 13L16.5 2.5" stroke="#1b8a1f" stroke-width="2" fill="none"/></svg><div class="t" style="left:1177.00px;top:542.36px;font-size:18px;font-weight:400;color:#4a5568;letter-spacing:0.39px;">Implementation ...</div><div class="t" style="left:1334.00px;top:542.36px;font-size:18px;font-weight:400;color:#4a5568;letter-spacing:0.2px;">Attachment</div><div class="a" style="left:1588px;top:527.4000000000001px;width:48px;height:44px;background:#fff0f0;border-radius:9px"></div><div class="a" style="left:1588px;top:527.4000000000001px;width:48px;height:44px"><svg class="a" style="transform:scale(1.4);transform-origin:center;left:13.5px;top:12px;" width="21" height="20" viewBox="0 0 21 20" fill="none"><rect x="2" y="3.5" width="16.5" height="14.5" rx="1" stroke="#e53935" stroke-width="1.8" fill="none"/><path d="M2 7.5H18.5M6 1.5V5M14.5 1.5V5M6.5 12L9.5 14.5L14 10" stroke="#e53935" stroke-width="1.8" fill="none"/></svg></div><div class="t" style="left:1649.00px;top:542.36px;font-size:18px;font-weight:400;color:#4a5568;letter-spacing:0.2px;">relation_8090</div><div class="t" style="left:1781.00px;width:60px;text-align:center;top:542.36px;font-size:18px;font-weight:400;color:#4a5568;letter-spacing:0px;">A</div><div class="a" style="left:61px;top:625px;width:1799px;height:1px;background:#e2e2e2"></div><div class="a" style="left:121.5px;top:591.7px;width:15px;height:15px;border:1px solid #d9dadd;border-radius:2px;background:#fff;box-sizing:content-box"></div><svg class="a" style="left:150.0px;top:589.2px;" width="21" height="21" viewBox="0 0 21 21" fill="none"><path d="M10.5 1.5L19 5.8L10.5 10L2 5.8Z" stroke="#3a56ab" stroke-width="1.7" fill="none" stroke-linejoin="round"/><path d="M2 5.8V10L10.5 14.3L19 10V5.8M2 10V14.5L10.5 18.8L19 14.5V10" stroke="#3a56ab" stroke-width="1.7" fill="none" stroke-linejoin="round"/></svg><div class="t" style="left:177.00px;top:592.36px;font-size:18px;font-weight:400;color:#3a56ab;letter-spacing:0.05px;">Routing Clip (A)</div><svg class="a" style="left:966.5px;top:591.7px;" width="18" height="16" viewBox="0 0 18 16" fill="none"><path d="M1.5 8.5L6 13L16.5 2.5" stroke="#1b8a1f" stroke-width="2" fill="none"/></svg><svg class="a" style="left:990.0px;top:590.7px;" width="17" height="19" viewBox="0 0 17 19" fill="none"><path d="M2.2 1.5V18" stroke="#000" stroke-width="2"/><rect x="3" y="2.5" width="12" height="8.5" fill="#000"/><g fill="#fff"><rect x="5" y="3.5" width="2" height="2"/><rect x="9" y="3.5" width="2" height="2"/><rect x="7" y="5.5" width="2" height="2"/><rect x="11" y="5.5" width="2" height="2"/><rect x="5" y="7.5" width="2" height="2"/><rect x="9" y="7.5" width="2" height="2"/></g></svg><svg class="a" style="left:1011.0px;top:590.2px;" width="19" height="19" viewBox="0 0 19 19" fill="none"><circle cx="9.5" cy="9.5" r="8.3" stroke="#ff1010" stroke-width="2.1" fill="none"/><path d="M10 5.7A3.8 3.8 0 0 1 12.8 11.4M6.2 7.6A3.8 3.8 0 0 0 9 13.3" stroke="#ff1010" stroke-width="1.5" fill="none"/><path d="M7.3 5.7L10.4 3.8L10.4 7.6Z M11.7 13.3L8.6 11.4L8.6 15.2Z" fill="#ff1010"/></svg><svg class="a" style="left:1033.5px;top:590.2px;" width="19" height="19" viewBox="0 0 19 19" fill="none"><circle cx="9.5" cy="9.5" r="8.3" stroke="#ff1010" stroke-width="2.1" fill="none"/><path d="M10 5.7A3.8 3.8 0 0 1 12.8 11.4M6.2 7.6A3.8 3.8 0 0 0 9 13.3" stroke="#ff1010" stroke-width="1.5" fill="none"/><path d="M7.3 5.7L10.4 3.8L10.4 7.6Z M11.7 13.3L8.6 11.4L8.6 15.2Z" fill="#ff1010"/></svg><svg class="a" style="left:1056.0px;top:590.2px;" width="19" height="19" viewBox="0 0 19 19" fill="none"><circle cx="9.5" cy="9.5" r="8.3" stroke="#ff1010" stroke-width="2.1" fill="none"/><path d="M10 5.7A3.8 3.8 0 0 1 12.8 11.4M6.2 7.6A3.8 3.8 0 0 0 9 13.3" stroke="#ff1010" stroke-width="1.5" fill="none"/><path d="M7.3 5.7L10.4 3.8L10.4 7.6Z M11.7 13.3L8.6 11.4L8.6 15.2Z" fill="#ff1010"/></svg><svg class="a" style="left:1078.5px;top:590.2px;" width="19" height="19" viewBox="0 0 19 19" fill="none"><circle cx="9.5" cy="9.5" r="8.3" stroke="#ff1010" stroke-width="2.1" fill="none"/><path d="M10 5.7A3.8 3.8 0 0 1 12.8 11.4M6.2 7.6A3.8 3.8 0 0 0 9 13.3" stroke="#ff1010" stroke-width="1.5" fill="none"/><path d="M7.3 5.7L10.4 3.8L10.4 7.6Z M11.7 13.3L8.6 11.4L8.6 15.2Z" fill="#ff1010"/></svg><svg class="a" style="left:1099.5px;top:590.2px;" width="21" height="19" viewBox="0 0 21 19" fill="none"><g stroke="#000" stroke-width="2" fill="none" stroke-linecap="round"><path d="M8 5.5H6A4 4 0 0 0 6 13.5H7.5"/><path d="M13 5.5H15A4 4 0 0 1 15 13.5H13"/><path d="M9 9.5H12"/><path d="M3 1.5L18.5 17.5"/></g></svg><div class="t" style="left:1174.50px;width:156px;text-align:center;top:592.36px;font-size:18px;font-weight:400;color:#4a5568;letter-spacing:0.17px;">Item</div><div class="t" style="left:1334.00px;top:592.36px;font-size:18px;font-weight:400;color:#4a5568;letter-spacing:0.58px;">Affected Item</div><div class="a" style="left:1588px;top:577.4000000000001px;width:48px;height:44px;background:#ddd6fe;border-radius:9px"></div><div class="a" style="left:1588px;top:577.4000000000001px;width:48px;height:44px"><svg class="a" style="transform:scale(1.4);transform-origin:center;left:13.5px;top:11.5px;" width="21" height="21" viewBox="0 0 21 21" fill="none"><path d="M10.5 1.5L19 5.8L10.5 10L2 5.8Z" stroke="#6a2ad8" stroke-width="1.7" fill="none" stroke-linejoin="round"/><path d="M2 5.8V10L10.5 14.3L19 10V5.8M2 10V14.5L10.5 18.8L19 14.5V10" stroke="#6a2ad8" stroke-width="1.7" fill="none" stroke-linejoin="round"/></svg></div><div class="t" style="left:1649.00px;top:592.36px;font-size:18px;font-weight:400;color:#4a5568;letter-spacing:0.2px;">relation_8091</div><div class="t" style="left:1781.00px;width:60px;text-align:center;top:592.36px;font-size:18px;font-weight:400;color:#4a5568;letter-spacing:0px;">A</div><div class="a" style="left:61px;top:675px;width:1799px;height:1px;background:#e2e2e2"></div><div class="a" style="left:99.5px;top:642.2px;width:15px;height:15px;background:#1e2f52;border-radius:3.5px"></div><svg class="a" style="left:99.5px;top:642.2px;" width="15" height="15" viewBox="0 0 15 15" fill="none"><path d="M4.5 6.3H10.5" stroke="#dfe6f2" stroke-width="1.8"/></svg><div class="a" style="left:121.5px;top:641.7px;width:15px;height:15px;border:1px solid #d9dadd;border-radius:2px;background:#fff;box-sizing:content-box"></div><svg class="a" style="left:150.0px;top:639.7px;" width="21" height="21" viewBox="0 0 21 21" fill="none"><path d="M9.5 2L16.5 5.5V9M9.5 2L2.5 5.5V13.5L9.5 17M2.5 5.5L9.5 9L16.5 5.5M9.5 9V13" stroke="#3a56ab" stroke-width="1.4" fill="none" stroke-linejoin="round"/><circle cx="15" cy="15" r="4.8" fill="#3a56ab"/><path d="M12.8 14.3C13.2 13 15.5 12.5 16.8 13.7M17.2 15.7C16.8 17 14.5 17.5 13.2 16.3" stroke="#fff" stroke-width="1.1" fill="none"/></svg><div class="t" style="left:177.00px;top:642.36px;font-size:18px;font-weight:400;color:#3a56ab;letter-spacing:0.3px;">Change request - 7466 (A)</div><svg class="a" style="left:966.5px;top:641.7px;" width="18" height="16" viewBox="0 0 18 16" fill="none"><path d="M1.5 8.5L6 13L16.5 2.5" stroke="#1b8a1f" stroke-width="2" fill="none"/></svg><svg class="a" style="left:988.5px;top:640.2px;" width="19" height="19" viewBox="0 0 19 19" fill="none"><circle cx="9.5" cy="9.5" r="8.3" stroke="#ff1010" stroke-width="2.1" fill="none"/><path d="M10 5.7A3.8 3.8 0 0 1 12.8 11.4M6.2 7.6A3.8 3.8 0 0 0 9 13.3" stroke="#ff1010" stroke-width="1.5" fill="none"/><path d="M7.3 5.7L10.4 3.8L10.4 7.6Z M11.7 13.3L8.6 11.4L8.6 15.2Z" fill="#ff1010"/></svg><svg class="a" style="left:1011.0px;top:640.2px;" width="19" height="19" viewBox="0 0 19 19" fill="none"><circle cx="9.5" cy="9.5" r="8.3" stroke="#ff1010" stroke-width="2.1" fill="none"/><path d="M10 5.7A3.8 3.8 0 0 1 12.8 11.4M6.2 7.6A3.8 3.8 0 0 0 9 13.3" stroke="#ff1010" stroke-width="1.5" fill="none"/><path d="M7.3 5.7L10.4 3.8L10.4 7.6Z M11.7 13.3L8.6 11.4L8.6 15.2Z" fill="#ff1010"/></svg><svg class="a" style="left:1032.5px;top:638.7px;" width="21" height="20" viewBox="0 0 21 20" fill="none"><path d="M4.5 3A9 9 0 0 1 19.5 9.5M14.5 18.8A9 9 0 0 1 1 10.5" stroke="#ee1111" stroke-width="1.6" fill="none"/><path d="M0.5 6.5H13M13 6.5L7.5 13.5H19M16.5 11L19.3 13.5L16.5 16" stroke="#ee1111" stroke-width="1.6" fill="none" stroke-linejoin="round"/><circle cx="6.5" cy="6.5" r="1.7" fill="#fff" stroke="#ee1111" stroke-width="1.4"/><circle cx="13" cy="6.5" r="1.7" fill="#fff" stroke="#ee1111" stroke-width="1.4"/><circle cx="7.5" cy="13.5" r="1.7" fill="#fff" stroke="#ee1111" stroke-width="1.4"/></svg><div class="t" style="left:1174.50px;width:156px;text-align:center;top:642.36px;font-size:18px;font-weight:400;color:#4a5568;letter-spacing:0.17px;">Change Request</div><div class="t" style="left:1334.00px;top:642.36px;font-size:18px;font-weight:400;color:#4a5568;letter-spacing:0.2px;">Issue - Change Request</div><div class="a" style="left:1588px;top:627.4000000000001px;width:48px;height:44px;background:#f9d3fb;border-radius:9px"></div><div class="a" style="left:1588px;top:627.4000000000001px;width:48px;height:44px"><svg class="a" style="transform:scale(1.4);transform-origin:center;left:13.5px;top:12px;" width="21" height="21" viewBox="0 0 21 21" fill="none"><path d="M9.5 2L16.5 5.5V9M9.5 2L2.5 5.5V13.5L9.5 17M2.5 5.5L9.5 9L16.5 5.5M9.5 9V13" stroke="#8f2aa0" stroke-width="1.4" fill="none" stroke-linejoin="round"/><circle cx="15" cy="15" r="4.8" fill="#8f2aa0"/><path d="M12.8 14.3C13.2 13 15.5 12.5 16.8 13.7M17.2 15.7C16.8 17 14.5 17.5 13.2 16.3" stroke="#fff" stroke-width="1.1" fill="none"/></svg></div><div class="t" style="left:1649.00px;top:642.36px;font-size:18px;font-weight:400;color:#4a5568;letter-spacing:0.2px;">relation_8132</div><div class="t" style="left:1781.00px;width:60px;text-align:center;top:642.36px;font-size:18px;font-weight:400;color:#4a5568;letter-spacing:0px;">A</div><div class="a" style="left:61px;top:725px;width:1799px;height:1px;background:#e2e2e2"></div><div class="a" style="left:122.0px;top:692.2px;width:15px;height:15px;background:#1e2f52;border-radius:3.5px"></div><svg class="a" style="left:122.0px;top:692.2px;" width="15" height="15" viewBox="0 0 15 15" fill="none"><path d="M3.3 7.5H11.7M7.5 3.3V11.7" stroke="#dfe6f2" stroke-width="2"/></svg><div class="a" style="left:144.0px;top:691.7px;width:15px;height:15px;border:1px solid #d9dadd;border-radius:2px;background:#fff;box-sizing:content-box"></div><svg class="a" style="left:172.5px;top:689.2px;" width="21" height="21" viewBox="0 0 21 21" fill="none"><path d="M10.5 1.5L19 5.8L10.5 10L2 5.8Z" stroke="#3a56ab" stroke-width="1.7" fill="none" stroke-linejoin="round"/><path d="M2 5.8V10L10.5 14.3L19 10V5.8M2 10V14.5L10.5 18.8L19 14.5V10" stroke="#3a56ab" stroke-width="1.7" fill="none" stroke-linejoin="round"/></svg><div class="t" style="left:199.50px;top:692.36px;font-size:18px;font-weight:400;color:#3a56ab;letter-spacing:0.3px;">Bicycle Assembly (A) <b style="font-weight:700;letter-spacing:0.4px">(8)</b></div><svg class="a" style="left:966.5px;top:690.7px;" width="18" height="16" viewBox="0 0 18 16" fill="none"><path d="M2 1.5L15 14.5M15 1.5L2 14.5" stroke="#ee1c25" stroke-width="2" fill="none"/></svg><svg class="a" style="left:990.0px;top:690.7px;" width="17" height="19" viewBox="0 0 17 19" fill="none"><path d="M2.2 1.5V18" stroke="#000" stroke-width="2"/><rect x="3" y="2.5" width="12" height="8.5" fill="#000"/><g fill="#fff"><rect x="5" y="3.5" width="2" height="2"/><rect x="9" y="3.5" width="2" height="2"/><rect x="7" y="5.5" width="2" height="2"/><rect x="11" y="5.5" width="2" height="2"/><rect x="5" y="7.5" width="2" height="2"/><rect x="9" y="7.5" width="2" height="2"/></g></svg><svg class="a" style="left:1011.0px;top:690.2px;" width="19" height="19" viewBox="0 0 19 19" fill="none"><circle cx="9.5" cy="9.5" r="8.3" stroke="#ff1010" stroke-width="2.1" fill="none"/><path d="M10 5.7A3.8 3.8 0 0 1 12.8 11.4M6.2 7.6A3.8 3.8 0 0 0 9 13.3" stroke="#ff1010" stroke-width="1.5" fill="none"/><path d="M7.3 5.7L10.4 3.8L10.4 7.6Z M11.7 13.3L8.6 11.4L8.6 15.2Z" fill="#ff1010"/></svg><svg class="a" style="left:1033.5px;top:690.2px;" width="19" height="19" viewBox="0 0 19 19" fill="none"><circle cx="9.5" cy="9.5" r="8.3" stroke="#ff1010" stroke-width="2.1" fill="none"/><path d="M10 5.7A3.8 3.8 0 0 1 12.8 11.4M6.2 7.6A3.8 3.8 0 0 0 9 13.3" stroke="#ff1010" stroke-width="1.5" fill="none"/><path d="M7.3 5.7L10.4 3.8L10.4 7.6Z M11.7 13.3L8.6 11.4L8.6 15.2Z" fill="#ff1010"/></svg><svg class="a" style="left:1056.0px;top:690.2px;" width="19" height="19" viewBox="0 0 19 19" fill="none"><circle cx="9.5" cy="9.5" r="8.3" stroke="#ff1010" stroke-width="2.1" fill="none"/><path d="M10 5.7A3.8 3.8 0 0 1 12.8 11.4M6.2 7.6A3.8 3.8 0 0 0 9 13.3" stroke="#ff1010" stroke-width="1.5" fill="none"/><path d="M7.3 5.7L10.4 3.8L10.4 7.6Z M11.7 13.3L8.6 11.4L8.6 15.2Z" fill="#ff1010"/></svg><svg class="a" style="left:1077.0px;top:690.2px;" width="21" height="19" viewBox="0 0 21 19" fill="none"><g stroke="#000" stroke-width="2" fill="none" stroke-linecap="round"><path d="M8 5.5H6A4 4 0 0 0 6 13.5H7.5"/><path d="M13 5.5H15A4 4 0 0 1 15 13.5H13"/><path d="M9 9.5H12"/><path d="M3 1.5L18.5 17.5"/></g></svg><div class="t" style="left:1174.50px;width:156px;text-align:center;top:692.36px;font-size:18px;font-weight:400;color:#4a5568;letter-spacing:0.17px;">Item</div><div class="t" style="left:1334.00px;top:692.36px;font-size:18px;font-weight:400;color:#4a5568;letter-spacing:0.58px;">Affected Item</div><div class="a" style="left:1588px;top:683.4000000000001px;width:48px;height:32px;background:radial-gradient(ellipse at 50% 55%,#2a2a2a 0%,#202020 60%,#121212 100%);border-radius:3px"></div><svg class="a" style="left:1588px;top:683.4000000000001px;" width="48" height="32" viewBox="0 0 48 32" fill="none"><g stroke="#0d0d0d" stroke-width="1.5" fill="none"><circle cx="11" cy="21.5" r="6.5"/><circle cx="35" cy="21.5" r="6.8"/><path d="M15.5 5.5L19.8 22.5L31.5 11.5M14 5.5H18M19.8 22.5L11 21.5M31.5 11.5L35 21.5M30 9.5L36 8.5M25 10.5H31"/></g></svg><div class="t" style="left:1649.00px;top:692.36px;font-size:18px;font-weight:400;color:#4a5568;letter-spacing:0.2px;">relation_8134</div><div class="t" style="left:1781.00px;width:60px;text-align:center;top:692.36px;font-size:18px;font-weight:400;color:#4a5568;letter-spacing:0px;">A</div><div class="a" style="left:61px;top:775px;width:1799px;height:1px;background:#e2e2e2"></div><div class="a" style="left:144.0px;top:741.7px;width:15px;height:15px;border:1px solid #d9dadd;border-radius:2px;background:#fff;box-sizing:content-box"></div><svg class="a" style="left:172.5px;top:739.2px;" width="21" height="21" viewBox="0 0 21 21" fill="none"><path d="M10.5 1.5L19 5.8L10.5 10L2 5.8Z" stroke="#3a56ab" stroke-width="1.7" fill="none" stroke-linejoin="round"/><path d="M2 5.8V10L10.5 14.3L19 10V5.8M2 10V14.5L10.5 18.8L19 14.5V10" stroke="#3a56ab" stroke-width="1.7" fill="none" stroke-linejoin="round"/></svg><div class="t" style="left:199.50px;top:742.36px;font-size:18px;font-weight:400;color:#3a56ab;letter-spacing:0.11px;">Routing Clip (A)</div><svg class="a" style="left:966.5px;top:741.7px;" width="18" height="16" viewBox="0 0 18 16" fill="none"><path d="M1.5 8.5L6 13L16.5 2.5" stroke="#1b8a1f" stroke-width="2" fill="none"/></svg><svg class="a" style="left:990.0px;top:740.7px;" width="17" height="19" viewBox="0 0 17 19" fill="none"><path d="M2.2 1.5V18" stroke="#000" stroke-width="2"/><rect x="3" y="2.5" width="12" height="8.5" fill="#000"/><g fill="#fff"><rect x="5" y="3.5" width="2" height="2"/><rect x="9" y="3.5" width="2" height="2"/><rect x="7" y="5.5" width="2" height="2"/><rect x="11" y="5.5" width="2" height="2"/><rect x="5" y="7.5" width="2" height="2"/><rect x="9" y="7.5" width="2" height="2"/></g></svg><svg class="a" style="left:1011.0px;top:740.2px;" width="19" height="19" viewBox="0 0 19 19" fill="none"><circle cx="9.5" cy="9.5" r="8.3" stroke="#ff1010" stroke-width="2.1" fill="none"/><path d="M10 5.7A3.8 3.8 0 0 1 12.8 11.4M6.2 7.6A3.8 3.8 0 0 0 9 13.3" stroke="#ff1010" stroke-width="1.5" fill="none"/><path d="M7.3 5.7L10.4 3.8L10.4 7.6Z M11.7 13.3L8.6 11.4L8.6 15.2Z" fill="#ff1010"/></svg><svg class="a" style="left:1033.5px;top:740.2px;" width="19" height="19" viewBox="0 0 19 19" fill="none"><circle cx="9.5" cy="9.5" r="8.3" stroke="#ff1010" stroke-width="2.1" fill="none"/><path d="M10 5.7A3.8 3.8 0 0 1 12.8 11.4M6.2 7.6A3.8 3.8 0 0 0 9 13.3" stroke="#ff1010" stroke-width="1.5" fill="none"/><path d="M7.3 5.7L10.4 3.8L10.4 7.6Z M11.7 13.3L8.6 11.4L8.6 15.2Z" fill="#ff1010"/></svg><svg class="a" style="left:1056.0px;top:740.2px;" width="19" height="19" viewBox="0 0 19 19" fill="none"><circle cx="9.5" cy="9.5" r="8.3" stroke="#ff1010" stroke-width="2.1" fill="none"/><path d="M10 5.7A3.8 3.8 0 0 1 12.8 11.4M6.2 7.6A3.8 3.8 0 0 0 9 13.3" stroke="#ff1010" stroke-width="1.5" fill="none"/><path d="M7.3 5.7L10.4 3.8L10.4 7.6Z M11.7 13.3L8.6 11.4L8.6 15.2Z" fill="#ff1010"/></svg><svg class="a" style="left:1078.5px;top:740.2px;" width="19" height="19" viewBox="0 0 19 19" fill="none"><circle cx="9.5" cy="9.5" r="8.3" stroke="#ff1010" stroke-width="2.1" fill="none"/><path d="M10 5.7A3.8 3.8 0 0 1 12.8 11.4M6.2 7.6A3.8 3.8 0 0 0 9 13.3" stroke="#ff1010" stroke-width="1.5" fill="none"/><path d="M7.3 5.7L10.4 3.8L10.4 7.6Z M11.7 13.3L8.6 11.4L8.6 15.2Z" fill="#ff1010"/></svg><svg class="a" style="left:1099.5px;top:740.2px;" width="21" height="19" viewBox="0 0 21 19" fill="none"><g stroke="#000" stroke-width="2" fill="none" stroke-linecap="round"><path d="M8 5.5H6A4 4 0 0 0 6 13.5H7.5"/><path d="M13 5.5H15A4 4 0 0 1 15 13.5H13"/><path d="M9 9.5H12"/><path d="M3 1.5L18.5 17.5"/></g></svg><div class="t" style="left:1174.50px;width:156px;text-align:center;top:742.36px;font-size:18px;font-weight:400;color:#4a5568;letter-spacing:0.17px;">Item</div><div class="t" style="left:1334.00px;top:742.36px;font-size:18px;font-weight:400;color:#4a5568;letter-spacing:0.58px;">Affected Item</div><div class="a" style="left:1588px;top:727.4000000000001px;width:48px;height:44px;background:#ddd6fe;border-radius:9px"></div><div class="a" style="left:1588px;top:727.4000000000001px;width:48px;height:44px"><svg class="a" style="transform:scale(1.4);transform-origin:center;left:13.5px;top:11.5px;" width="21" height="21" viewBox="0 0 21 21" fill="none"><path d="M10.5 1.5L19 5.8L10.5 10L2 5.8Z" stroke="#6a2ad8" stroke-width="1.7" fill="none" stroke-linejoin="round"/><path d="M2 5.8V10L10.5 14.3L19 10V5.8M2 10V14.5L10.5 18.8L19 14.5V10" stroke="#6a2ad8" stroke-width="1.7" fill="none" stroke-linejoin="round"/></svg></div><div class="t" style="left:1649.00px;top:742.36px;font-size:18px;font-weight:400;color:#4a5568;letter-spacing:0.2px;">relation_8135</div><div class="t" style="left:1781.00px;width:60px;text-align:center;top:742.36px;font-size:18px;font-weight:400;color:#4a5568;letter-spacing:0px;">A</div><div class="a" style="left:61px;top:825px;width:1799px;height:1px;background:#e2e2e2"></div><div class="a" style="left:144.0px;top:791.7px;width:15px;height:15px;border:1px solid #d9dadd;border-radius:2px;background:#fff;box-sizing:content-box"></div><svg class="a" style="left:172.5px;top:788.7px;" width="22" height="23" viewBox="0 0 22 23" fill="none"><path d="M0.3 11.5H6.5M1.2 6.3L6.5 11.5M1.2 16.7L6.5 11.5" stroke="#3a56ab" stroke-width="1.9" fill="none"/><path d="M7.3 1.5V21.5" stroke="#3a56ab" stroke-width="2"/><path d="M10.8 2.2L20.7 6.6V16.4L10.8 21Z" stroke="#3a56ab" stroke-width="1.9" fill="none" stroke-linejoin="round"/></svg><div class="t" style="left:199.50px;top:792.36px;font-size:18px;font-weight:400;color:#3a56ab;letter-spacing:0.32px;">This could lead to malfunctioning features, safety hazards, and customer dissatisfaction (A)</div><svg class="a" style="left:966.5px;top:791.7px;" width="18" height="16" viewBox="0 0 18 16" fill="none"><path d="M1.5 8.5L6 13L16.5 2.5" stroke="#1b8a1f" stroke-width="2" fill="none"/></svg><div class="t" style="left:1174.50px;width:156px;text-align:center;top:792.36px;font-size:18px;font-weight:400;color:#4a5568;letter-spacing:0.17px;">Impact</div><div class="t" style="left:1334.00px;top:792.36px;font-size:18px;font-weight:400;color:#4a5568;letter-spacing:0.2px;">Change - Impact</div><div class="a" style="left:1588px;top:777.4000000000001px;width:48px;height:44px;background:#e3e6fd;border-radius:9px"></div><div class="a" style="left:1588px;top:777.4000000000001px;width:48px;height:44px"><svg class="a" style="transform:scale(1.12);transform-origin:center;left:13.5px;top:11px;" width="22" height="23" viewBox="0 0 22 23" fill="none"><path d="M0.3 11.5H6.5M1.2 6.3L6.5 11.5M1.2 16.7L6.5 11.5" stroke="#6568ef" stroke-width="1.9" fill="none"/><path d="M7.3 1.5V21.5" stroke="#6568ef" stroke-width="2"/><path d="M10.8 2.2L20.7 6.6V16.4L10.8 21Z" stroke="#6568ef" stroke-width="1.9" fill="none" stroke-linejoin="round"/></svg></div><div class="t" style="left:1649.00px;top:792.36px;font-size:18px;font-weight:400;color:#4a5568;letter-spacing:0.2px;">relation_8142</div><div class="t" style="left:1781.00px;width:60px;text-align:center;top:792.36px;font-size:18px;font-weight:400;color:#4a5568;letter-spacing:0px;">A</div><div class="a" style="left:61px;top:875px;width:1799px;height:1px;background:#e2e2e2"></div><div class="a" style="left:144.0px;top:841.7px;width:15px;height:15px;border:1px solid #d9dadd;border-radius:2px;background:#fff;box-sizing:content-box"></div><svg class="a" style="left:171.5px;top:838.7px;" width="22" height="22" viewBox="0 0 22 22" fill="none"><rect x="1.3" y="1.6" width="19.4" height="19.4" rx="2.5" stroke="#3a56ab" stroke-width="1.9" fill="none"/><path d="M11 6V16.6M6.4 8.6L15.6 14M15.6 8.6L6.4 14" stroke="#3a56ab" stroke-width="2.1"/></svg><div class="t" style="left:199.50px;top:842.36px;font-size:18px;font-weight:400;color:#3a56ab;letter-spacing:0.315px;">Improper cable routing may cause wear and damage from contact with moving parts (A)</div><svg class="a" style="left:966.5px;top:841.7px;" width="18" height="16" viewBox="0 0 18 16" fill="none"><path d="M1.5 8.5L6 13L16.5 2.5" stroke="#1b8a1f" stroke-width="2" fill="none"/></svg><div class="t" style="left:1174.50px;width:156px;text-align:center;top:842.36px;font-size:18px;font-weight:400;color:#4a5568;letter-spacing:0.17px;">Risk</div><div class="t" style="left:1334.00px;top:842.36px;font-size:18px;font-weight:400;color:#4a5568;letter-spacing:0.2px;">Change - Risk</div><div class="a" style="left:1588px;top:827.4000000000001px;width:48px;height:44px;background:#def2fd;border-radius:9px"></div><div class="a" style="left:1588px;top:827.4000000000001px;width:48px;height:44px"><svg class="a" style="transform:scale(1.2);transform-origin:center;left:12.5px;top:11px;" width="22" height="22" viewBox="0 0 22 22" fill="none"><rect x="1.3" y="1.6" width="19.4" height="19.4" rx="2.5" stroke="#0e5f98" stroke-width="1.9" fill="none"/><path d="M11 6V16.6M6.4 8.6L15.6 14M15.6 8.6L6.4 14" stroke="#0e5f98" stroke-width="2.1"/></svg></div><div class="t" style="left:1649.00px;top:842.36px;font-size:18px;font-weight:400;color:#4a5568;letter-spacing:0.2px;">relation_8143</div><div class="t" style="left:1781.00px;width:60px;text-align:center;top:842.36px;font-size:18px;font-weight:400;color:#4a5568;letter-spacing:0px;">A</div><div class="a" style="left:61px;top:925px;width:1799px;height:1px;background:#e2e2e2"></div><div class="a" style="left:122.0px;top:892.2px;width:15px;height:15px;background:#1e2f52;border-radius:3.5px"></div><svg class="a" style="left:122.0px;top:892.2px;" width="15" height="15" viewBox="0 0 15 15" fill="none"><path d="M3.3 7.5H11.7M7.5 3.3V11.7" stroke="#dfe6f2" stroke-width="2"/></svg><div class="a" style="left:144.0px;top:891.7px;width:15px;height:15px;border:1px solid #d9dadd;border-radius:2px;background:#fff;box-sizing:content-box"></div><svg class="a" style="left:172.5px;top:889.7px;" width="21" height="20" viewBox="0 0 21 20" fill="none"><path d="M4.5 3A9 9 0 0 1 19.5 9.5M14.5 18.8A9 9 0 0 1 1 10.5" stroke="#3a56ab" stroke-width="1.6" fill="none"/><path d="M0.5 6.5H13M13 6.5L7.5 13.5H19M16.5 11L19.3 13.5L16.5 16" stroke="#3a56ab" stroke-width="1.6" fill="none" stroke-linejoin="round"/><circle cx="6.5" cy="6.5" r="1.7" fill="#fff" stroke="#3a56ab" stroke-width="1.4"/><circle cx="13" cy="6.5" r="1.7" fill="#fff" stroke="#3a56ab" stroke-width="1.4"/><circle cx="7.5" cy="13.5" r="1.7" fill="#fff" stroke="#3a56ab" stroke-width="1.4"/></svg><div class="t" style="left:199.50px;top:892.36px;font-size:18px;font-weight:400;color:#3a56ab;letter-spacing:0.283px;">Wire Routing and Assembly Safety Optimization Workflow (A) <b style="font-weight:700;letter-spacing:0.4px">(27)</b></div><svg class="a" style="left:966.5px;top:891.7px;" width="18" height="16" viewBox="0 0 18 16" fill="none"><path d="M1.5 8.5L6 13L16.5 2.5" stroke="#1b8a1f" stroke-width="2" fill="none"/></svg><svg class="a" style="left:990.0px;top:890.7px;" width="17" height="19" viewBox="0 0 17 19" fill="none"><path d="M2.2 1.5V18" stroke="#000" stroke-width="2"/><rect x="3" y="2.5" width="12" height="8.5" fill="#000"/><g fill="#fff"><rect x="5" y="3.5" width="2" height="2"/><rect x="9" y="3.5" width="2" height="2"/><rect x="7" y="5.5" width="2" height="2"/><rect x="11" y="5.5" width="2" height="2"/><rect x="5" y="7.5" width="2" height="2"/><rect x="9" y="7.5" width="2" height="2"/></g></svg><svg class="a" style="left:1011.0px;top:890.2px;" width="19" height="19" viewBox="0 0 19 19" fill="none"><rect x="2" y="1.5" width="15" height="16" rx="2.5" stroke="#3b8bef" stroke-width="1.7" fill="none"/><rect x="5" y="4.5" width="9" height="3.5" rx="0.8" stroke="#3b8bef" stroke-width="1.4" fill="none"/><path d="M5 11H10M5 14H9" stroke="#3b8bef" stroke-width="1.4"/><circle cx="13" cy="13" r="1.4" stroke="#3b8bef" stroke-width="1.3" fill="none"/></svg><div class="t" style="left:1174.50px;width:156px;text-align:center;top:892.36px;font-size:18px;font-weight:400;color:#4a5568;letter-spacing:0.17px;">Workflow</div><div class="t" style="left:1334.00px;top:892.36px;font-size:18px;font-weight:400;color:#4a5568;letter-spacing:0.2px;">Change - Workflow</div><div class="a" style="left:1588px;top:877.4000000000001px;width:48px;height:44px;background:#c6f6ec;border-radius:9px"></div><div class="a" style="left:1588px;top:877.4000000000001px;width:48px;height:44px"><svg class="a" style="transform:scale(1.4);transform-origin:center;left:13.5px;top:12px;" width="21" height="20" viewBox="0 0 21 20" fill="none"><path d="M4.5 3A9 9 0 0 1 19.5 9.5M14.5 18.8A9 9 0 0 1 1 10.5" stroke="#1d5e52" stroke-width="1.6" fill="none"/><path d="M0.5 6.5H13M13 6.5L7.5 13.5H19M16.5 11L19.3 13.5L16.5 16" stroke="#1d5e52" stroke-width="1.6" fill="none" stroke-linejoin="round"/><circle cx="6.5" cy="6.5" r="1.7" fill="#fff" stroke="#1d5e52" stroke-width="1.4"/><circle cx="13" cy="6.5" r="1.7" fill="#fff" stroke="#1d5e52" stroke-width="1.4"/><circle cx="7.5" cy="13.5" r="1.7" fill="#fff" stroke="#1d5e52" stroke-width="1.4"/></svg></div><div class="t" style="left:1649.00px;top:892.36px;font-size:18px;font-weight:400;color:#4a5568;letter-spacing:0.2px;">relation_8133</div><div class="t" style="left:1781.00px;width:60px;text-align:center;top:892.36px;font-size:18px;font-weight:400;color:#4a5568;letter-spacing:0px;">A</div><div class="a" style="left:61px;top:975px;width:1799px;height:1px;background:#e2e2e2"></div><div class="a" style="left:122.0px;top:942.2px;width:15px;height:15px;background:#1e2f52;border-radius:3.5px"></div><svg class="a" style="left:122.0px;top:942.2px;" width="15" height="15" viewBox="0 0 15 15" fill="none"><path d="M3.3 7.5H11.7M7.5 3.3V11.7" stroke="#dfe6f2" stroke-width="2"/></svg><div class="a" style="left:144.0px;top:941.7px;width:15px;height:15px;border:1px solid #d9dadd;border-radius:2px;background:#fff;box-sizing:content-box"></div><svg class="a" style="left:172.5px;top:939.7px;" width="21" height="21" viewBox="0 0 21 21" fill="none"><path d="M3 5A8.6 8.6 0 0 1 18.5 10.3M1.2 10.3A8.6 8.6 0 0 0 16.5 15.5" stroke="#3a56ab" stroke-width="1.5" fill="none"/><path d="M0.8 6.8L1.6 2.6L5.2 5.2Z M19 13.6L18.4 17.9L14.7 15.4Z" fill="#3a56ab"/><path d="M9.8 5.6L13.9 8V12.7L9.8 15.1L5.7 12.7V8Z M5.7 8L9.8 10.3L13.9 8M9.8 10.3V15.1" stroke="#3a56ab" stroke-width="1.4" fill="none" stroke-linejoin="round"/></svg><div class="t" style="left:199.50px;top:942.36px;font-size:18px;font-weight:400;color:#3a56ab;letter-spacing:0.39px;">Change order - 5866 (A)</div><svg class="a" style="left:966.5px;top:941.7px;" width="18" height="16" viewBox="0 0 18 16" fill="none"><path d="M1.5 8.5L6 13L16.5 2.5" stroke="#1b8a1f" stroke-width="2" fill="none"/></svg><svg class="a" style="left:988.5px;top:940.2px;" width="19" height="19" viewBox="0 0 19 19" fill="none"><circle cx="9.5" cy="9.5" r="8.3" stroke="#ff1010" stroke-width="2.1" fill="none"/><path d="M10 5.7A3.8 3.8 0 0 1 12.8 11.4M6.2 7.6A3.8 3.8 0 0 0 9 13.3" stroke="#ff1010" stroke-width="1.5" fill="none"/><path d="M7.3 5.7L10.4 3.8L10.4 7.6Z M11.7 13.3L8.6 11.4L8.6 15.2Z" fill="#ff1010"/></svg><svg class="a" style="left:1011.0px;top:940.2px;" width="19" height="19" viewBox="0 0 19 19" fill="none"><circle cx="9.5" cy="9.5" r="8.3" stroke="#ff1010" stroke-width="2.1" fill="none"/><path d="M10 5.7A3.8 3.8 0 0 1 12.8 11.4M6.2 7.6A3.8 3.8 0 0 0 9 13.3" stroke="#ff1010" stroke-width="1.5" fill="none"/><path d="M7.3 5.7L10.4 3.8L10.4 7.6Z M11.7 13.3L8.6 11.4L8.6 15.2Z" fill="#ff1010"/></svg><svg class="a" style="left:1032.5px;top:938.7px;" width="21" height="20" viewBox="0 0 21 20" fill="none"><path d="M4.5 3A9 9 0 0 1 19.5 9.5M14.5 18.8A9 9 0 0 1 1 10.5" stroke="#ee1111" stroke-width="1.6" fill="none"/><path d="M0.5 6.5H13M13 6.5L7.5 13.5H19M16.5 11L19.3 13.5L16.5 16" stroke="#ee1111" stroke-width="1.6" fill="none" stroke-linejoin="round"/><circle cx="6.5" cy="6.5" r="1.7" fill="#fff" stroke="#ee1111" stroke-width="1.4"/><circle cx="13" cy="6.5" r="1.7" fill="#fff" stroke="#ee1111" stroke-width="1.4"/><circle cx="7.5" cy="13.5" r="1.7" fill="#fff" stroke="#ee1111" stroke-width="1.4"/></svg><div class="t" style="left:1174.50px;width:156px;text-align:center;top:942.36px;font-size:18px;font-weight:400;color:#4a5568;letter-spacing:0.17px;">Change Order</div><div class="t" style="left:1334.00px;top:942.36px;font-size:18px;font-weight:400;color:#4a5568;letter-spacing:0.2px;">Change Request - Change ...</div><div class="a" style="left:1588px;top:927.4000000000001px;width:48px;height:44px;background:#fde4ef;border-radius:9px"></div><div class="a" style="left:1588px;top:927.4000000000001px;width:48px;height:44px"><svg class="a" style="transform:scale(1.4);transform-origin:center;left:13.5px;top:12px;" width="21" height="21" viewBox="0 0 21 21" fill="none"><path d="M3 5A8.6 8.6 0 0 1 18.5 10.3M1.2 10.3A8.6 8.6 0 0 0 16.5 15.5" stroke="#df2e79" stroke-width="1.5" fill="none"/><path d="M0.8 6.8L1.6 2.6L5.2 5.2Z M19 13.6L18.4 17.9L14.7 15.4Z" fill="#df2e79"/><path d="M9.8 5.6L13.9 8V12.7L9.8 15.1L5.7 12.7V8Z M5.7 8L9.8 10.3L13.9 8M9.8 10.3V15.1" stroke="#df2e79" stroke-width="1.4" fill="none" stroke-linejoin="round"/></svg></div><div class="t" style="left:1649.00px;top:942.36px;font-size:18px;font-weight:400;color:#4a5568;letter-spacing:0.2px;">relation_8150</div><div class="t" style="left:1781.00px;width:60px;text-align:center;top:942.36px;font-size:18px;font-weight:400;color:#4a5568;letter-spacing:0px;">A</div><div class="a" style="left:61px;top:1025px;width:1799px;height:1px;background:#e2e2e2"></div><div class="a" style="left:99.5px;top:992.2px;width:15px;height:15px;background:#1e2f52;border-radius:3.5px"></div><svg class="a" style="left:99.5px;top:992.2px;" width="15" height="15" viewBox="0 0 15 15" fill="none"><path d="M3.3 7.5H11.7M7.5 3.3V11.7" stroke="#dfe6f2" stroke-width="2"/></svg><div class="a" style="left:121.5px;top:991.7px;width:15px;height:15px;border:1px solid #d9dadd;border-radius:2px;background:#fff;box-sizing:content-box"></div><svg class="a" style="left:150.0px;top:989.7px;" width="21" height="21" viewBox="0 0 21 21" fill="none"><path d="M4.5 4.5A8.4 8.4 0 0 0 9 19M7.8 2.3A8.4 8.4 0 0 1 15.5 16.5" stroke="#3a56ab" stroke-width="1.9" fill="none"/><path d="M2 1.6H7.6V7.2Z M18.3 19.6H12.7V14Z" fill="#3a56ab"/><path d="M5.8 10.7L8.8 13.4L14.6 8" stroke="#3a56ab" stroke-width="1.8" fill="none"/></svg><div class="t" style="left:177.00px;top:992.36px;font-size:18px;font-weight:400;color:#3a56ab;letter-spacing:0.3px;">Change Task - 795 (A)</div><svg class="a" style="left:966.5px;top:991.7px;" width="18" height="16" viewBox="0 0 18 16" fill="none"><path d="M1.5 8.5L6 13L16.5 2.5" stroke="#1b8a1f" stroke-width="2" fill="none"/></svg><svg class="a" style="left:990.0px;top:990.7px;" width="17" height="19" viewBox="0 0 17 19" fill="none"><path d="M2.2 1.5V18" stroke="#000" stroke-width="2"/><rect x="3" y="2.5" width="12" height="8.5" fill="#000"/><g fill="#fff"><rect x="5" y="3.5" width="2" height="2"/><rect x="9" y="3.5" width="2" height="2"/><rect x="7" y="5.5" width="2" height="2"/><rect x="11" y="5.5" width="2" height="2"/><rect x="5" y="7.5" width="2" height="2"/><rect x="9" y="7.5" width="2" height="2"/></g></svg><svg class="a" style="left:1011.0px;top:990.2px;" width="19" height="19" viewBox="0 0 19 19" fill="none"><circle cx="9.5" cy="9.5" r="8.3" stroke="#ff1010" stroke-width="2.1" fill="none"/><path d="M10 5.7A3.8 3.8 0 0 1 12.8 11.4M6.2 7.6A3.8 3.8 0 0 0 9 13.3" stroke="#ff1010" stroke-width="1.5" fill="none"/><path d="M7.3 5.7L10.4 3.8L10.4 7.6Z M11.7 13.3L8.6 11.4L8.6 15.2Z" fill="#ff1010"/></svg><svg class="a" style="left:1033.5px;top:990.2px;" width="19" height="19" viewBox="0 0 19 19" fill="none"><circle cx="9.5" cy="9.5" r="8.3" stroke="#ff1010" stroke-width="2.1" fill="none"/><path d="M10 5.7A3.8 3.8 0 0 1 12.8 11.4M6.2 7.6A3.8 3.8 0 0 0 9 13.3" stroke="#ff1010" stroke-width="1.5" fill="none"/><path d="M7.3 5.7L10.4 3.8L10.4 7.6Z M11.7 13.3L8.6 11.4L8.6 15.2Z" fill="#ff1010"/></svg><div class="t" style="left:1174.50px;width:156px;text-align:center;top:992.36px;font-size:18px;font-weight:400;color:#4a5568;letter-spacing:0.17px;">Change Task</div><div class="t" style="left:1334.00px;top:992.36px;font-size:18px;font-weight:400;color:#4a5568;letter-spacing:0.2px;">Change Order - Change Ta...</div><div class="a" style="left:1588px;top:977.4000000000001px;width:48px;height:44px;background:#f7e3fc;border-radius:9px"></div><div class="a" style="left:1588px;top:977.4000000000001px;width:48px;height:44px"><svg class="a" style="transform:scale(1.4);transform-origin:center;left:13.5px;top:12px;" width="21" height="21" viewBox="0 0 21 21" fill="none"><path d="M4.5 4.5A8.4 8.4 0 0 0 9 19M7.8 2.3A8.4 8.4 0 0 1 15.5 16.5" stroke="#c023d2" stroke-width="1.9" fill="none"/><path d="M2 1.6H7.6V7.2Z M18.3 19.6H12.7V14Z" fill="#c023d2"/><path d="M5.8 10.7L8.8 13.4L14.6 8" stroke="#c023d2" stroke-width="1.8" fill="none"/></svg></div><div class="t" style="left:1649.00px;top:992.36px;font-size:18px;font-weight:400;color:#4a5568;letter-spacing:0.2px;">relation_8180</div><div class="t" style="left:1781.00px;width:60px;text-align:center;top:992.36px;font-size:18px;font-weight:400;color:#4a5568;letter-spacing:0px;">A</div><div class="a" style="left:84px;top:307px;width:1px;height:693px;background:#a3a3a3"></div><div class="a" style="left:106px;top:657px;width:1px;height:293px;background:#a3a3a3"></div><div class="a" style="left:85px;top:348px;width:23px;height:1px;background-image:linear-gradient(90deg,#a3a3a3 55%,transparent 55%);background-size:4.4px 1px"></div><div class="a" style="left:85px;top:398px;width:23px;height:1px;background-image:linear-gradient(90deg,#a3a3a3 55%,transparent 55%);background-size:4.4px 1px"></div><div class="a" style="left:85px;top:448px;width:23px;height:1px;background-image:linear-gradient(90deg,#a3a3a3 55%,transparent 55%);background-size:4.4px 1px"></div><div class="a" style="left:85px;top:498px;width:15px;height:1px;background-image:linear-gradient(90deg,#a3a3a3 55%,transparent 55%);background-size:4.4px 1px"></div><div class="a" style="left:85px;top:548px;width:23px;height:1px;background-image:linear-gradient(90deg,#a3a3a3 55%,transparent 55%);background-size:4.4px 1px"></div><div class="a" style="left:85px;top:598px;width:23px;height:1px;background-image:linear-gradient(90deg,#a3a3a3 55%,transparent 55%);background-size:4.4px 1px"></div><div class="a" style="left:85px;top:648px;width:15px;height:1px;background-image:linear-gradient(90deg,#a3a3a3 55%,transparent 55%);background-size:4.4px 1px"></div><div class="a" style="left:107px;top:698px;width:15px;height:1px;background-image:linear-gradient(90deg,#a3a3a3 55%,transparent 55%);background-size:4.4px 1px"></div><div class="a" style="left:107px;top:748px;width:23px;height:1px;background-image:linear-gradient(90deg,#a3a3a3 55%,transparent 55%);background-size:4.4px 1px"></div><div class="a" style="left:107px;top:798px;width:23px;height:1px;background-image:linear-gradient(90deg,#a3a3a3 55%,transparent 55%);background-size:4.4px 1px"></div><div class="a" style="left:107px;top:848px;width:23px;height:1px;background-image:linear-gradient(90deg,#a3a3a3 55%,transparent 55%);background-size:4.4px 1px"></div><div class="a" style="left:107px;top:898px;width:15px;height:1px;background-image:linear-gradient(90deg,#a3a3a3 55%,transparent 55%);background-size:4.4px 1px"></div><div class="a" style="left:107px;top:948px;width:15px;height:1px;background-image:linear-gradient(90deg,#a3a3a3 55%,transparent 55%);background-size:4.4px 1px"></div><div class="a" style="left:84px;top:999px;width:16px;height:1px;background:#a3a3a3"></div></div><div class="a" style="left:62px;top:1027px;width:840px;height:8px;background:#7b7b7b;border-radius:0 0 0 6px"></div><div class="a" style="left:964px;top:1016px;width:40px;height:19px;background:#9ca3ad;border-radius:6px 6px 0 0"></div><svg class="a" style="left:964px;top:1016px;" width="40" height="19" viewBox="0 0 40 19" fill="none"><path d="M13.5 13L20 7L26.5 13" stroke="#fff" stroke-width="1.8" fill="none"/></svg><div class="a" style="left:1840px;top:590px;width:20px;height:40px;background:#9ca3ad;border-radius:5px 0 0 5px"></div><svg class="a" style="left:1840px;top:590px;" width="20" height="40" viewBox="0 0 20 40" fill="none"><path d="M12 15L8 20L12 25" stroke="#fff" stroke-width="1.5" fill="none"/></svg><div class="a" style="left:0px;top:1036px;width:1918px;height:4px;background:#e1e4e9"></div><div class="a" style="left:59px;top:106px;width:1850px;height:930px;border:1.5px solid #0f4391;border-radius:9px;box-sizing:border-box"></div><div class="a" style="left:1912px;top:106px;width:6px;height:928px;background:#9e9e9e;border-radius:3px"></div>
</body></html>
